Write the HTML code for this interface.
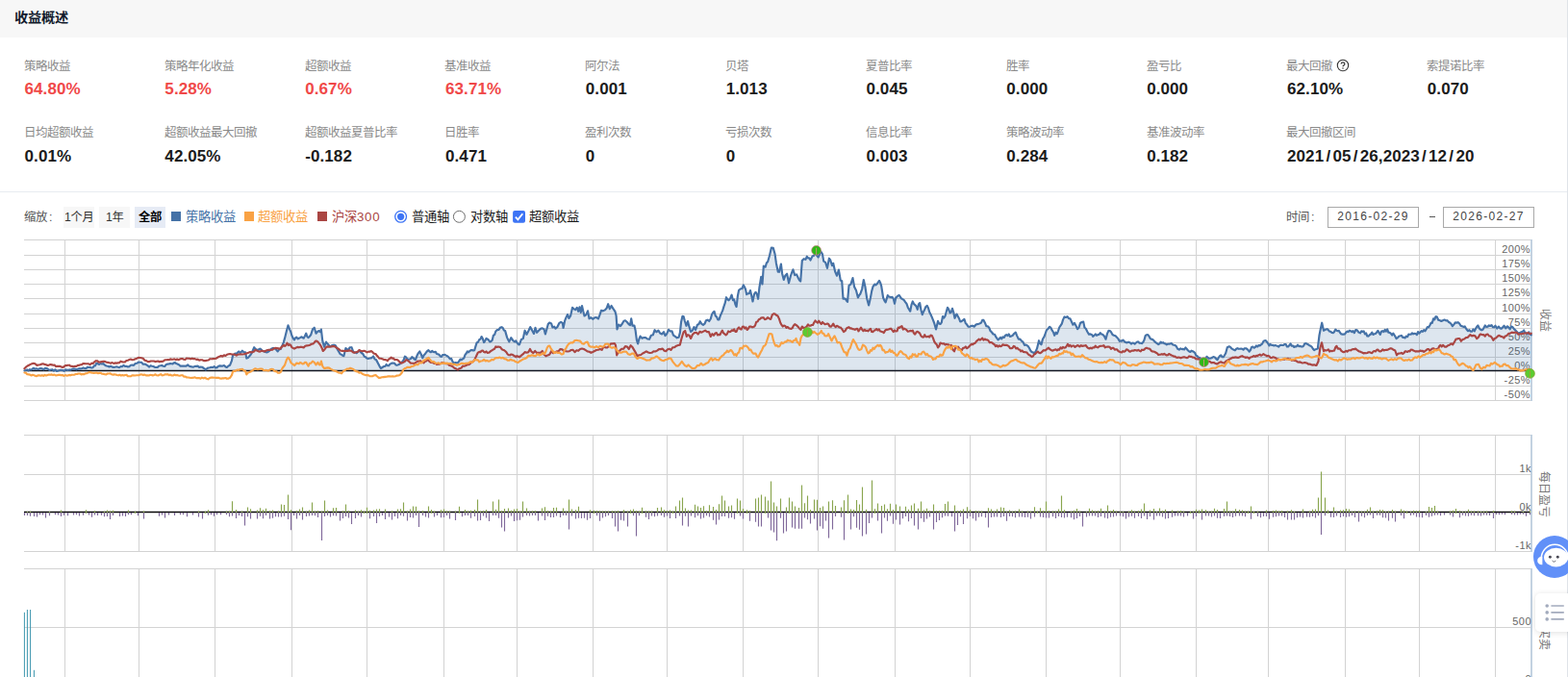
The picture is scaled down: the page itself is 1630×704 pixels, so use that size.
<!DOCTYPE html><html lang="zh-CN"><head><meta charset="utf-8"><title>收益概述</title><style>
html,body{margin:0;padding:0}
body{width:1630px;height:704px;position:relative;overflow:hidden;background:#fff;font-family:"Liberation Sans",sans-serif}
.g{position:absolute;overflow:visible;display:block}
.g text{font-family:"Liberation Sans","Noto Sans CJK SC",sans-serif}
.sr{position:absolute;opacity:0;font-size:12px;white-space:nowrap;pointer-events:none;width:1px;height:1px;overflow:hidden}
.l{position:absolute;white-space:nowrap;line-height:1;font-family:"Liberation Sans",sans-serif}
.l i.sl{font-style:normal;padding:0 2.2px}
.hdr{position:absolute;left:0;top:0;width:1629px;height:39px;background:#f7f7f7}
.sep{position:absolute;left:0;top:199px;width:1629px;height:1px;background:#e8ecf0}
.rb{position:absolute;left:1629px;top:0;width:1px;height:704px;background:#dfe3e8}
.btn{position:absolute;top:215px;width:32px;height:22px;background:#f7f7f7}
.btn.on{background:#e6ebf5}
.sq{position:absolute;top:220px;width:10px;height:10px}
.inp{position:absolute;top:215px;width:93px;height:20px;border:1px solid #a9a9a9;background:#fff}
.ax{right:38px;font-size:11px;color:#666;letter-spacing:0.45px}
.fab{position:absolute;left:1594px;top:557.2px;width:44px;height:44px;border-radius:50%;background:#6190f8}
.card{position:absolute;left:1596px;top:617px;width:40px;height:40px;border-radius:5px;background:#fff;box-shadow:0 1px 6px rgba(0,0,0,0.13)}
</style></head><body>
<div class="hdr"></div>
<svg class="g" style="left:14.90px;top:9.40px;" width="58.00" height="19.60" viewBox="0 -14 58.00 19.60" fill="#111a2c"><text x="0" y="0" font-size="14.2" font-weight="700" letter-spacing="-0.2">收益概述</text></svg>
<svg class="g" style="left:25.00px;top:60.50px;" width="50.00" height="16.80" viewBox="0 -12 50.00 16.80" fill="#8a8a8a"><text x="0" y="0" font-size="12.5" letter-spacing="-0.5">策略收益</text></svg>
<span class="l" style="left:25.50px;top:83.51px;font-size:17px;color:#f04848;font-weight:700;letter-spacing:0.10px;">64.80%</span>
<svg class="g" style="left:170.83px;top:60.50px;" width="74.00" height="16.80" viewBox="0 -12 74.00 16.80" fill="#8a8a8a"><text x="0" y="0" font-size="12.5" letter-spacing="-0.5">策略年化收益</text></svg>
<span class="l" style="left:171.33px;top:83.51px;font-size:17px;color:#f04848;font-weight:700;letter-spacing:0.10px;">5.28%</span>
<svg class="g" style="left:316.66px;top:60.50px;" width="50.00" height="16.80" viewBox="0 -12 50.00 16.80" fill="#8a8a8a"><text x="0" y="0" font-size="12.5" letter-spacing="-0.5">超额收益</text></svg>
<span class="l" style="left:317.16px;top:83.51px;font-size:17px;color:#f04848;font-weight:700;letter-spacing:0.10px;">0.67%</span>
<svg class="g" style="left:462.49px;top:60.50px;" width="50.00" height="16.80" viewBox="0 -12 50.00 16.80" fill="#8a8a8a"><text x="0" y="0" font-size="12.5" letter-spacing="-0.5">基准收益</text></svg>
<span class="l" style="left:462.99px;top:83.51px;font-size:17px;color:#f04848;font-weight:700;letter-spacing:0.10px;">63.71%</span>
<svg class="g" style="left:608.32px;top:60.50px;" width="38.00" height="16.80" viewBox="0 -12 38.00 16.80" fill="#8a8a8a"><text x="0" y="0" font-size="12.5" letter-spacing="-0.5">阿尔法</text></svg>
<span class="l" style="left:608.82px;top:83.51px;font-size:17px;color:#1b1b1b;font-weight:700;letter-spacing:0.10px;">0.001</span>
<svg class="g" style="left:754.15px;top:60.50px;" width="26.00" height="16.80" viewBox="0 -12 26.00 16.80" fill="#8a8a8a"><text x="0" y="0" font-size="12.5" letter-spacing="-0.5">贝塔</text></svg>
<span class="l" style="left:754.65px;top:83.51px;font-size:17px;color:#1b1b1b;font-weight:700;letter-spacing:0.10px;">1.013</span>
<svg class="g" style="left:899.98px;top:60.50px;" width="50.00" height="16.80" viewBox="0 -12 50.00 16.80" fill="#8a8a8a"><text x="0" y="0" font-size="12.5" letter-spacing="-0.5">夏普比率</text></svg>
<span class="l" style="left:900.48px;top:83.51px;font-size:17px;color:#1b1b1b;font-weight:700;letter-spacing:0.10px;">0.045</span>
<svg class="g" style="left:1045.81px;top:60.50px;" width="26.00" height="16.80" viewBox="0 -12 26.00 16.80" fill="#8a8a8a"><text x="0" y="0" font-size="12.5" letter-spacing="-0.5">胜率</text></svg>
<span class="l" style="left:1046.31px;top:83.51px;font-size:17px;color:#1b1b1b;font-weight:700;letter-spacing:0.10px;">0.000</span>
<svg class="g" style="left:1191.64px;top:60.50px;" width="38.00" height="16.80" viewBox="0 -12 38.00 16.80" fill="#8a8a8a"><text x="0" y="0" font-size="12.5" letter-spacing="-0.5">盈亏比</text></svg>
<span class="l" style="left:1192.14px;top:83.51px;font-size:17px;color:#1b1b1b;font-weight:700;letter-spacing:0.10px;">0.000</span>
<svg class="g" style="left:1337.47px;top:60.50px;" width="50.00" height="16.80" viewBox="0 -12 50.00 16.80" fill="#8a8a8a"><text x="0" y="0" font-size="12.5" letter-spacing="-0.5">最大回撤</text></svg>
<svg class="g" style="left:1388.9px;top:61.2px" width="14" height="14" viewBox="0 0 14 14"><circle cx="7" cy="7" r="5.7" fill="none" stroke="#333" stroke-width="1.1"/><path d="M5.1 5.6 Q5.1 3.9 7 3.9 Q8.9 3.9 8.9 5.4 Q8.9 6.4 7.9 6.9 Q7 7.4 7 8.3" fill="none" stroke="#333" stroke-width="1.15"/><circle cx="7" cy="10" r="0.75" fill="#333"/></svg>
<span class="l" style="left:1337.97px;top:83.51px;font-size:17px;color:#1b1b1b;font-weight:700;letter-spacing:0.10px;">62.10%</span>
<svg class="g" style="left:1483.30px;top:60.50px;" width="62.00" height="16.80" viewBox="0 -12 62.00 16.80" fill="#8a8a8a"><text x="0" y="0" font-size="12.5" letter-spacing="-0.5">索提诺比率</text></svg>
<span class="l" style="left:1483.80px;top:83.51px;font-size:17px;color:#1b1b1b;font-weight:700;letter-spacing:0.10px;">0.070</span>
<svg class="g" style="left:25.00px;top:130.40px;" width="74.00" height="16.80" viewBox="0 -12 74.00 16.80" fill="#8a8a8a"><text x="0" y="0" font-size="12.5" letter-spacing="-0.5">日均超额收益</text></svg>
<span class="l" style="left:25.50px;top:153.51px;font-size:17px;color:#1b1b1b;font-weight:700;letter-spacing:0.10px;">0.01%</span>
<svg class="g" style="left:170.83px;top:130.40px;" width="98.00" height="16.80" viewBox="0 -12 98.00 16.80" fill="#8a8a8a"><text x="0" y="0" font-size="12.5" letter-spacing="-0.5">超额收益最大回撤</text></svg>
<span class="l" style="left:171.33px;top:153.51px;font-size:17px;color:#1b1b1b;font-weight:700;letter-spacing:0.10px;">42.05%</span>
<svg class="g" style="left:316.66px;top:130.40px;" width="98.00" height="16.80" viewBox="0 -12 98.00 16.80" fill="#8a8a8a"><text x="0" y="0" font-size="12.5" letter-spacing="-0.5">超额收益夏普比率</text></svg>
<span class="l" style="left:317.16px;top:153.51px;font-size:17px;color:#1b1b1b;font-weight:700;letter-spacing:0.10px;">-0.182</span>
<svg class="g" style="left:462.49px;top:130.40px;" width="38.00" height="16.80" viewBox="0 -12 38.00 16.80" fill="#8a8a8a"><text x="0" y="0" font-size="12.5" letter-spacing="-0.5">日胜率</text></svg>
<span class="l" style="left:462.99px;top:153.51px;font-size:17px;color:#1b1b1b;font-weight:700;letter-spacing:0.10px;">0.471</span>
<svg class="g" style="left:608.32px;top:130.40px;" width="50.00" height="16.80" viewBox="0 -12 50.00 16.80" fill="#8a8a8a"><text x="0" y="0" font-size="12.5" letter-spacing="-0.5">盈利次数</text></svg>
<span class="l" style="left:608.82px;top:153.51px;font-size:17px;color:#1b1b1b;font-weight:700;letter-spacing:0.10px;">0</span>
<svg class="g" style="left:754.15px;top:130.40px;" width="50.00" height="16.80" viewBox="0 -12 50.00 16.80" fill="#8a8a8a"><text x="0" y="0" font-size="12.5" letter-spacing="-0.5">亏损次数</text></svg>
<span class="l" style="left:754.65px;top:153.51px;font-size:17px;color:#1b1b1b;font-weight:700;letter-spacing:0.10px;">0</span>
<svg class="g" style="left:899.98px;top:130.40px;" width="50.00" height="16.80" viewBox="0 -12 50.00 16.80" fill="#8a8a8a"><text x="0" y="0" font-size="12.5" letter-spacing="-0.5">信息比率</text></svg>
<span class="l" style="left:900.48px;top:153.51px;font-size:17px;color:#1b1b1b;font-weight:700;letter-spacing:0.10px;">0.003</span>
<svg class="g" style="left:1045.81px;top:130.40px;" width="62.00" height="16.80" viewBox="0 -12 62.00 16.80" fill="#8a8a8a"><text x="0" y="0" font-size="12.5" letter-spacing="-0.5">策略波动率</text></svg>
<span class="l" style="left:1046.31px;top:153.51px;font-size:17px;color:#1b1b1b;font-weight:700;letter-spacing:0.10px;">0.284</span>
<svg class="g" style="left:1191.64px;top:130.40px;" width="62.00" height="16.80" viewBox="0 -12 62.00 16.80" fill="#8a8a8a"><text x="0" y="0" font-size="12.5" letter-spacing="-0.5">基准波动率</text></svg>
<span class="l" style="left:1192.14px;top:153.51px;font-size:17px;color:#1b1b1b;font-weight:700;letter-spacing:0.10px;">0.182</span>
<svg class="g" style="left:1337.47px;top:130.40px;" width="74.00" height="16.80" viewBox="0 -12 74.00 16.80" fill="#8a8a8a"><text x="0" y="0" font-size="12.5" letter-spacing="-0.5">最大回撤区间</text></svg>
<span class="l" style="left:1337.97px;top:153.51px;font-size:17px;color:#1b1b1b;font-weight:700;letter-spacing:0.10px;">2021<i class="sl">/</i>05<i class="sl">/</i>26,2023<i class="sl">/</i>12<i class="sl">/</i>20</span>
<div class="sep"></div><div class="rb"></div>
<svg class="g" style="left:25.00px;top:217.80px;" width="31.94" height="16.80" viewBox="0 -12 31.94 16.80" fill="#555"><text x="0" y="0" font-size="12.4" letter-spacing="-0.4">缩放<tspan dx="2">:</tspan></text></svg>
<div class="btn" style="left:66px"></div><div class="btn" style="left:103px"></div><div class="btn on" style="left:140px"></div>
<svg class="g" style="left:67.20px;top:217.70px;" width="32.66" height="16.80" viewBox="0 -12 32.66 16.80" fill="#333"><text x="0" y="0" font-size="12.3" letter-spacing="-0.3">1个月</text></svg>
<svg class="g" style="left:109.70px;top:217.70px;" width="20.66" height="16.80" viewBox="0 -12 20.66 16.80" fill="#333"><text x="0" y="0" font-size="12.3" letter-spacing="-0.3">1年</text></svg>
<svg class="g" style="left:144.20px;top:217.80px;" width="26.00" height="16.80" viewBox="0 -12 26.00 16.80" fill="#000"><text x="0" y="0" font-size="12.3" font-weight="700" letter-spacing="-0.3">全部</text></svg>
<div class="sq" style="left:178px;background:#4572A7"></div>
<svg class="g" style="left:192.60px;top:216.90px;" width="54.00" height="18.20" viewBox="0 -13 54.00 18.20" fill="#4572A7"><text x="0" y="0" font-size="13.3" letter-spacing="-0.3">策略收益</text></svg>
<div class="sq" style="left:254px;background:#f9a244"></div>
<svg class="g" style="left:268.40px;top:216.90px;" width="54.00" height="18.20" viewBox="0 -13 54.00 18.20" fill="#f9a244"><text x="0" y="0" font-size="13.3" letter-spacing="-0.3">超额收益</text></svg>
<div class="sq" style="left:330px;background:#AA4643"></div>
<svg class="g" style="left:344.90px;top:216.90px;" width="52.35" height="18.20" viewBox="0 -13 52.35 18.20" fill="#AA4643"><text x="0" y="0" font-size="13.3" letter-spacing="-0.3">沪深<tspan letter-spacing="0.7">300</tspan></text></svg>
<svg class="g" style="left:409px;top:218px" width="140" height="15" viewBox="409 218 140 15"><circle cx="416.6" cy="225.3" r="5.9" fill="#fff" stroke="#3d74f5" stroke-width="1.3"/><circle cx="416.6" cy="225.3" r="3.6" fill="#3d74f5"/><circle cx="477.4" cy="225.3" r="6" fill="#fff" stroke="#707070" stroke-width="1"/><rect x="533.1" y="218.9" width="12.9" height="12.9" rx="2" fill="#3d74f5"/><path d="M535.9 225.6 L538.4 228.3 L543.3 222.2" fill="none" stroke="#fff" stroke-width="1.8"/></svg>
<svg class="g" style="left:428.10px;top:216.90px;" width="41.00" height="18.20" viewBox="0 -13 41.00 18.20" fill="#1a1a1a"><text x="0" y="0" font-size="13.3" letter-spacing="-0.3">普通轴</text></svg>
<svg class="g" style="left:489.00px;top:216.90px;" width="41.00" height="18.20" viewBox="0 -13 41.00 18.20" fill="#1a1a1a"><text x="0" y="0" font-size="13.3" letter-spacing="-0.3">对数轴</text></svg>
<svg class="g" style="left:550.20px;top:216.90px;" width="54.00" height="18.20" viewBox="0 -13 54.00 18.20" fill="#1a1a1a"><text x="0" y="0" font-size="13.3" letter-spacing="-0.3">超额收益</text></svg>
<svg class="g" style="left:1337.20px;top:217.80px;" width="31.94" height="16.80" viewBox="0 -12 31.94 16.80" fill="#555"><text x="0" y="0" font-size="12.4" letter-spacing="-0.4">时间<tspan dx="2">:</tspan></text></svg>
<div class="inp" style="left:1380px"></div><div class="inp" style="left:1500px"></div>
<span class="l" style="left:1390.20px;top:219.44px;font-size:12px;color:#444;letter-spacing:1.32px;">2016-02-29</span>
<span class="l" style="left:1510.20px;top:219.44px;font-size:12px;color:#444;letter-spacing:1.32px;">2026-02-27</span>
<span class="l" style="left:1486.4px;top:224.8px;width:5.6px;height:1px;background:#555;font-size:0">-</span>
<svg class="g" style="left:0;top:240px" width="1630" height="464" viewBox="0 240 1630 464"><g fill="none" shape-rendering="crispEdges"><path d="M25 249.5H1592.5" stroke="#d3d3d3" stroke-width="1"/><path d="M25 265.5H1592.5" stroke="#d3d3d3" stroke-width="1"/><path d="M25 280.5H1592.5" stroke="#d3d3d3" stroke-width="1"/><path d="M25 295.5H1592.5" stroke="#d3d3d3" stroke-width="1"/><path d="M25 310.5H1592.5" stroke="#d3d3d3" stroke-width="1"/><path d="M25 326.5H1592.5" stroke="#d3d3d3" stroke-width="1"/><path d="M25 341.5H1592.5" stroke="#d3d3d3" stroke-width="1"/><path d="M25 356.5H1592.5" stroke="#d3d3d3" stroke-width="1"/><path d="M25 371.5H1592.5" stroke="#d3d3d3" stroke-width="1"/><path d="M25 401.5H1592.5" stroke="#d3d3d3" stroke-width="1"/><path d="M25 416.5H1592.5" stroke="#d3d3d3" stroke-width="1"/><path d="M67.5 249.5V416.5" stroke="#d3d3d3" stroke-width="1"/><path d="M144.5 249.5V416.5" stroke="#d3d3d3" stroke-width="1"/><path d="M223.5 249.5V416.5" stroke="#d3d3d3" stroke-width="1"/><path d="M303.5 249.5V416.5" stroke="#d3d3d3" stroke-width="1"/><path d="M381.6 249.5V416.5" stroke="#d3d3d3" stroke-width="1"/><path d="M461.5 249.5V416.5" stroke="#d3d3d3" stroke-width="1"/><path d="M537.6 249.5V416.5" stroke="#d3d3d3" stroke-width="1"/><path d="M616.5 249.5V416.5" stroke="#d3d3d3" stroke-width="1"/><path d="M693.7 249.5V416.5" stroke="#d3d3d3" stroke-width="1"/><path d="M772.5 249.5V416.5" stroke="#d3d3d3" stroke-width="1"/><path d="M850.6 249.5V416.5" stroke="#d3d3d3" stroke-width="1"/><path d="M930.5 249.5V416.5" stroke="#d3d3d3" stroke-width="1"/><path d="M1008.3 249.5V416.5" stroke="#d3d3d3" stroke-width="1"/><path d="M1087.5 249.5V416.5" stroke="#d3d3d3" stroke-width="1"/><path d="M1164.5 249.5V416.5" stroke="#d3d3d3" stroke-width="1"/><path d="M1243.4 249.5V416.5" stroke="#d3d3d3" stroke-width="1"/><path d="M1318.7 249.5V416.5" stroke="#d3d3d3" stroke-width="1"/><path d="M1398.5 249.5V416.5" stroke="#d3d3d3" stroke-width="1"/><path d="M1475.7 249.5V416.5" stroke="#d3d3d3" stroke-width="1"/><path d="M1554.7 249.5V416.5" stroke="#d3d3d3" stroke-width="1"/><path d="M25 452.5H1592.5" stroke="#d3d3d3" stroke-width="1"/><path d="M25 493.5H1592.5" stroke="#d3d3d3" stroke-width="1"/><path d="M25 573.5H1592.5" stroke="#d3d3d3" stroke-width="1"/><path d="M67.5 452.5V573.5" stroke="#d3d3d3" stroke-width="1"/><path d="M144.5 452.5V573.5" stroke="#d3d3d3" stroke-width="1"/><path d="M223.5 452.5V573.5" stroke="#d3d3d3" stroke-width="1"/><path d="M303.5 452.5V573.5" stroke="#d3d3d3" stroke-width="1"/><path d="M381.6 452.5V573.5" stroke="#d3d3d3" stroke-width="1"/><path d="M461.5 452.5V573.5" stroke="#d3d3d3" stroke-width="1"/><path d="M537.6 452.5V573.5" stroke="#d3d3d3" stroke-width="1"/><path d="M616.5 452.5V573.5" stroke="#d3d3d3" stroke-width="1"/><path d="M693.7 452.5V573.5" stroke="#d3d3d3" stroke-width="1"/><path d="M772.5 452.5V573.5" stroke="#d3d3d3" stroke-width="1"/><path d="M850.6 452.5V573.5" stroke="#d3d3d3" stroke-width="1"/><path d="M930.5 452.5V573.5" stroke="#d3d3d3" stroke-width="1"/><path d="M1008.3 452.5V573.5" stroke="#d3d3d3" stroke-width="1"/><path d="M1087.5 452.5V573.5" stroke="#d3d3d3" stroke-width="1"/><path d="M1164.5 452.5V573.5" stroke="#d3d3d3" stroke-width="1"/><path d="M1243.4 452.5V573.5" stroke="#d3d3d3" stroke-width="1"/><path d="M1318.7 452.5V573.5" stroke="#d3d3d3" stroke-width="1"/><path d="M1398.5 452.5V573.5" stroke="#d3d3d3" stroke-width="1"/><path d="M1475.7 452.5V573.5" stroke="#d3d3d3" stroke-width="1"/><path d="M1554.7 452.5V573.5" stroke="#d3d3d3" stroke-width="1"/><path d="M25 591.5H1592.5" stroke="#d3d3d3" stroke-width="1"/><path d="M25 652.5H1592.5" stroke="#d3d3d3" stroke-width="1"/><path d="M67.5 591.5V704" stroke="#d3d3d3" stroke-width="1"/><path d="M144.5 591.5V704" stroke="#d3d3d3" stroke-width="1"/><path d="M223.5 591.5V704" stroke="#d3d3d3" stroke-width="1"/><path d="M303.5 591.5V704" stroke="#d3d3d3" stroke-width="1"/><path d="M381.6 591.5V704" stroke="#d3d3d3" stroke-width="1"/><path d="M461.5 591.5V704" stroke="#d3d3d3" stroke-width="1"/><path d="M537.6 591.5V704" stroke="#d3d3d3" stroke-width="1"/><path d="M616.5 591.5V704" stroke="#d3d3d3" stroke-width="1"/><path d="M693.7 591.5V704" stroke="#d3d3d3" stroke-width="1"/><path d="M772.5 591.5V704" stroke="#d3d3d3" stroke-width="1"/><path d="M850.6 591.5V704" stroke="#d3d3d3" stroke-width="1"/><path d="M930.5 591.5V704" stroke="#d3d3d3" stroke-width="1"/><path d="M1008.3 591.5V704" stroke="#d3d3d3" stroke-width="1"/><path d="M1087.5 591.5V704" stroke="#d3d3d3" stroke-width="1"/><path d="M1164.5 591.5V704" stroke="#d3d3d3" stroke-width="1"/><path d="M1243.4 591.5V704" stroke="#d3d3d3" stroke-width="1"/><path d="M1318.7 591.5V704" stroke="#d3d3d3" stroke-width="1"/><path d="M1398.5 591.5V704" stroke="#d3d3d3" stroke-width="1"/><path d="M1475.7 591.5V704" stroke="#d3d3d3" stroke-width="1"/><path d="M1554.7 591.5V704" stroke="#d3d3d3" stroke-width="1"/></g><g fill="none"><path d="M1592 249V417" stroke="#c0d0e0" stroke-width="1.9"/><path d="M1592 452V574" stroke="#c0d0e0" stroke-width="1.9"/><path d="M1592 591V704" stroke="#c0d0e0" stroke-width="1.9"/></g><text x="1591.1" y="263.15" text-anchor="end" font-family="Liberation Sans, sans-serif" font-size="11" letter-spacing="0.45" fill="#666">200%</text><text x="1591.1" y="278.15" text-anchor="end" font-family="Liberation Sans, sans-serif" font-size="11" letter-spacing="0.45" fill="#666">175%</text><text x="1591.1" y="293.15" text-anchor="end" font-family="Liberation Sans, sans-serif" font-size="11" letter-spacing="0.45" fill="#666">150%</text><text x="1591.1" y="308.15" text-anchor="end" font-family="Liberation Sans, sans-serif" font-size="11" letter-spacing="0.45" fill="#666">125%</text><text x="1591.1" y="324.15" text-anchor="end" font-family="Liberation Sans, sans-serif" font-size="11" letter-spacing="0.45" fill="#666">100%</text><text x="1591.1" y="339.15" text-anchor="end" font-family="Liberation Sans, sans-serif" font-size="11" letter-spacing="0.45" fill="#666">75%</text><text x="1591.1" y="354.15" text-anchor="end" font-family="Liberation Sans, sans-serif" font-size="11" letter-spacing="0.45" fill="#666">50%</text><text x="1591.1" y="369.15" text-anchor="end" font-family="Liberation Sans, sans-serif" font-size="11" letter-spacing="0.45" fill="#666">25%</text><text x="1591.1" y="384.25" text-anchor="end" font-family="Liberation Sans, sans-serif" font-size="11" letter-spacing="0.45" fill="#666">0%</text><text x="1591.1" y="399.35" text-anchor="end" font-family="Liberation Sans, sans-serif" font-size="11" letter-spacing="0.45" fill="#666">-25%</text><text x="1591.1" y="414.25" text-anchor="end" font-family="Liberation Sans, sans-serif" font-size="11" letter-spacing="0.45" fill="#666">-50%</text><path d="M25.4 385.5 L26.8 385.0 L28.2 384.4 L29.6 385.3 L31.0 384.2 L32.3 384.5 L33.5 383.9 L34.7 382.8 L36.4 383.8 L38.0 383.3 L39.6 384.1 L41.1 383.3 L42.6 383.0 L44.0 383.5 L45.5 384.3 L47.0 382.9 L48.5 383.0 L49.9 383.9 L51.4 385.0 L52.9 384.5 L54.4 384.2 L55.9 385.6 L57.4 384.3 L59.0 386.0 L60.5 385.5 L62.1 384.9 L63.8 384.8 L65.4 385.1 L66.6 385.8 L67.9 384.4 L69.1 384.6 L70.6 384.9 L72.0 384.4 L73.5 384.7 L75.0 383.8 L76.4 383.6 L77.9 383.6 L79.4 384.3 L80.9 383.8 L82.3 383.2 L83.8 383.4 L85.3 383.0 L86.7 382.4 L88.2 383.1 L89.7 382.9 L91.2 381.7 L92.5 382.0 L93.9 381.9 L95.2 382.5 L96.6 382.3 L97.8 380.3 L99.0 380.4 L100.2 377.8 L101.7 378.1 L103.1 379.0 L104.5 378.0 L105.9 378.5 L107.4 378.1 L109.0 379.6 L110.5 380.5 L112.0 380.7 L113.6 381.5 L115.1 380.8 L116.6 381.6 L118.2 381.9 L119.6 381.7 L121.1 381.3 L122.6 381.8 L124.0 382.1 L125.5 381.1 L127.0 381.2 L128.5 379.8 L129.9 380.8 L131.4 380.8 L132.9 381.5 L134.4 381.1 L135.9 379.8 L137.5 379.5 L139.0 379.9 L140.7 378.0 L142.3 377.8 L143.9 376.6 L145.6 376.8 L147.2 376.9 L148.8 378.7 L150.5 378.5 L152.1 379.3 L153.7 380.4 L155.2 381.6 L156.6 380.2 L158.0 380.7 L159.5 381.0 L160.9 381.9 L162.3 382.0 L163.8 381.9 L165.3 380.5 L166.7 380.3 L168.2 380.0 L169.7 380.8 L171.2 381.0 L172.6 379.2 L174.1 378.6 L175.6 378.4 L177.1 378.1 L178.3 378.3 L179.5 378.4 L180.7 377.4 L182.0 377.1 L183.2 378.1 L184.4 378.5 L186.0 379.3 L187.5 380.6 L189.0 380.6 L190.6 380.6 L192.1 380.6 L193.6 380.7 L195.2 379.4 L196.7 380.7 L198.2 381.1 L199.6 381.5 L201.1 381.6 L202.6 380.9 L204.1 380.9 L205.6 380.6 L207.1 382.0 L208.6 381.5 L210.2 381.7 L211.4 382.7 L212.6 383.4 L213.9 384.5 L215.1 383.3 L216.3 382.5 L218.0 382.3 L219.6 381.9 L221.2 382.0 L222.7 381.1 L224.2 382.5 L225.6 382.1 L227.1 380.8 L228.6 380.4 L230.1 380.6 L231.5 380.6 L233.0 380.1 L234.5 381.4 L235.9 382.0 L237.5 380.5 L239.1 379.7 L240.9 375.1 L242.1 369.3 L243.3 368.6 L244.5 367.5 L245.8 368.1 L247.0 366.5 L248.2 365.5 L249.4 366.9 L250.7 366.0 L251.9 364.7 L253.5 366.3 L255.1 366.4 L256.3 372.6 L257.8 372.0 L259.3 370.3 L260.5 369.0 L261.7 367.0 L262.9 364.3 L264.2 361.2 L265.4 362.9 L266.6 363.3 L267.9 364.3 L269.1 363.2 L270.3 362.6 L271.5 363.4 L272.8 364.7 L274.0 365.3 L275.2 365.8 L276.4 366.2 L277.7 366.4 L278.9 365.7 L280.1 364.8 L281.4 363.4 L282.6 362.4 L283.8 361.9 L285.0 362.2 L286.3 362.7 L287.5 364.1 L288.7 365.4 L290.3 363.3 L291.9 362.9 L293.6 358.9 L294.8 356.1 L296.1 351.4 L298.0 343.8 L299.5 338.3 L301.2 342.6 L302.3 345.2 L303.4 349.0 L304.7 351.7 L305.9 353.4 L307.1 351.4 L308.3 350.7 L309.6 352.4 L310.8 351.7 L312.0 351.1 L313.2 350.3 L314.5 351.0 L315.7 351.7 L316.9 349.4 L318.2 346.7 L319.4 350.2 L320.6 351.1 L321.8 349.9 L323.1 348.3 L325.0 342.4 L326.8 340.7 L328.5 346.7 L330.4 344.5 L331.7 344.1 L332.9 345.1 L333.9 342.5 L335.3 354.6 L337.1 360.8 L339.0 355.6 L341.0 358.1 L342.5 359.7 L343.9 360.2 L345.2 359.0 L346.4 358.8 L347.6 358.8 L348.8 359.2 L350.1 361.9 L351.3 364.2 L352.5 366.3 L353.7 368.3 L355.0 368.7 L356.2 369.8 L357.4 370.2 L359.4 362.1 L360.5 363.1 L361.6 364.3 L363.6 361.3 L365.5 361.2 L367.2 365.6 L368.5 366.5 L369.7 366.5 L370.9 367.2 L372.1 365.6 L373.4 364.8 L374.6 365.7 L375.8 367.0 L377.3 368.0 L378.8 370.7 L380.0 371.3 L381.2 372.4 L382.8 373.0 L384.4 372.5 L385.6 372.5 L386.9 371.6 L388.1 370.5 L389.6 373.6 L391.0 374.1 L392.3 376.4 L393.5 378.8 L394.7 381.1 L395.9 383.0 L397.5 382.0 L399.1 381.0 L400.4 380.9 L401.6 379.0 L402.8 380.2 L404.1 380.3 L405.3 378.7 L406.5 378.1 L407.7 377.6 L409.0 377.5 L410.2 377.8 L411.4 379.4 L412.6 379.8 L414.1 379.3 L415.6 378.5 L416.8 377.2 L418.0 376.4 L419.6 374.4 L420.9 370.7 L422.1 371.5 L423.3 373.2 L424.5 373.8 L425.8 373.5 L427.0 373.1 L428.2 371.2 L429.4 372.0 L430.7 373.5 L431.9 374.1 L433.4 370.1 L434.8 367.3 L436.3 365.4 L437.8 368.5 L439.3 372.3 L440.5 369.6 L441.7 368.3 L442.9 366.7 L444.2 365.0 L445.4 364.1 L446.6 365.5 L447.9 366.2 L449.1 364.9 L450.3 365.9 L451.5 366.2 L452.8 365.8 L454.0 368.0 L455.2 368.2 L456.4 368.8 L457.7 370.4 L458.9 370.9 L460.1 369.1 L461.4 369.0 L462.6 368.9 L463.8 369.6 L465.0 370.2 L466.3 371.3 L467.7 373.2 L469.2 372.9 L470.4 375.8 L471.7 377.9 L473.3 377.0 L474.9 377.4 L476.1 376.9 L477.3 375.6 L478.5 373.5 L479.8 374.2 L481.0 373.2 L482.2 372.6 L483.4 369.2 L484.7 367.5 L485.9 365.4 L487.1 366.3 L488.3 365.1 L489.6 364.1 L490.8 364.1 L492.0 364.6 L493.2 364.2 L494.5 359.9 L495.7 356.2 L496.9 355.9 L498.2 353.2 L499.4 352.6 L500.6 350.0 L501.8 352.1 L503.1 356.1 L504.3 354.4 L505.5 351.9 L506.8 352.7 L508.0 353.7 L509.2 355.5 L510.4 355.1 L511.7 353.7 L512.9 348.7 L514.1 348.1 L515.3 344.5 L516.8 343.1 L518.3 343.0 L520.2 340.5 L521.5 340.2 L522.7 341.0 L523.9 343.4 L525.1 343.9 L527.1 350.9 L528.2 353.3 L529.3 355.3 L531.3 351.1 L532.5 353.0 L533.7 354.5 L535.0 355.5 L536.2 354.3 L537.8 356.8 L539.4 358.4 L540.0 358.2 L541.9 353.0 L543.8 352.1 L545.6 343.7 L547.5 347.8 L549.4 344.0 L551.2 340.1 L553.1 343.4 L555.0 347.0 L556.5 340.8 L558.1 345.8 L560.0 343.7 L561.9 341.9 L563.8 341.3 L565.6 342.4 L566.9 347.5 L568.1 343.2 L569.8 337.0 L571.2 335.5 L573.1 336.4 L574.4 340.5 L576.2 339.6 L577.5 341.7 L579.4 340.0 L581.2 336.2 L583.1 334.9 L584.8 335.9 L585.6 341.0 L587.2 333.4 L588.5 330.1 L590.0 327.0 L591.5 331.0 L593.1 328.4 L595.0 319.9 L596.5 321.1 L598.1 322.2 L599.8 319.8 L601.2 323.8 L602.5 319.4 L603.8 324.9 L605.0 318.0 L606.2 323.3 L607.5 328.5 L609.4 327.2 L611.0 323.3 L612.5 331.3 L614.4 330.2 L616.2 331.8 L618.1 330.3 L620.0 330.1 L621.9 331.5 L623.5 327.4 L625.0 322.8 L626.9 323.4 L628.8 322.4 L630.6 320.6 L632.2 316.2 L633.8 321.3 L635.6 318.0 L637.2 320.6 L639.4 323.8 L640.6 328.3 L641.5 342.4 L643.1 337.6 L645.0 339.1 L646.9 336.5 L648.5 333.7 L650.0 333.3 L651.9 335.0 L653.8 337.4 L655.0 338.1 L656.2 331.4 L657.5 338.7 L659.4 338.5 L660.6 343.6 L661.9 353.7 L663.1 357.4 L664.4 352.5 L665.6 349.6 L667.5 351.8 L669.4 351.1 L671.2 351.1 L673.1 352.5 L675.0 352.8 L676.9 348.7 L678.8 348.3 L680.6 343.2 L682.5 345.3 L684.4 343.6 L686.2 346.5 L688.1 347.5 L690.0 345.2 L691.5 349.1 L693.1 347.3 L695.0 342.8 L696.9 344.5 L698.5 344.4 L700.0 348.6 L701.9 349.9 L703.8 351.3 L705.6 350.8 L706.9 345.9 L708.1 334.7 L709.4 328.9 L710.6 329.1 L711.9 334.0 L713.5 338.8 L715.0 334.0 L716.5 339.9 L718.1 344.9 L720.0 343.4 L721.5 340.0 L723.1 343.0 L725.0 337.7 L726.5 337.0 L727.8 334.2 L729.4 336.8 L731.0 337.8 L732.5 336.7 L734.0 333.3 L735.6 332.7 L737.2 334.0 L738.8 331.5 L740.0 327.0 L741.2 325.0 L742.5 323.8 L743.8 328.5 L745.0 329.3 L746.2 332.3 L747.5 332.3 L748.8 328.3 L750.0 325.7 L751.2 322.9 L752.5 318.6 L753.8 314.9 L755.0 309.2 L756.2 311.1 L757.5 312.3 L759.1 310.4 L760.6 306.7 L761.9 312.1 L763.1 311.3 L764.4 316.5 L765.6 319.0 L766.9 307.6 L768.1 301.8 L770.0 300.2 L771.4 300.1 L772.8 296.4 L773.9 298.2 L775.0 300.7 L776.2 306.2 L777.5 305.2 L778.8 305.2 L780.0 302.0 L781.2 307.2 L782.5 313.5 L784.1 305.6 L785.6 303.8 L786.9 306.0 L788.1 310.8 L789.4 299.1 L791.2 287.8 L792.5 295.5 L793.8 276.6 L795.6 277.7 L796.9 273.4 L798.1 272.3 L800.0 265.8 L801.9 257.6 L803.8 257.9 L805.6 264.3 L806.9 273.7 L808.8 282.7 L810.0 282.8 L811.9 274.5 L813.1 284.4 L814.8 291.0 L816.2 286.8 L818.1 284.7 L820.0 294.3 L821.9 287.0 L823.1 283.5 L824.4 280.3 L826.2 286.1 L828.1 285.4 L830.0 289.5 L831.1 291.4 L832.2 292.5 L833.8 271.1 L835.6 269.2 L837.5 269.8 L838.8 266.7 L840.0 268.3 L841.2 268.3 L842.5 270.5 L844.4 266.6 L846.2 265.8 L848.1 262.1 L849.4 266.1 L850.6 267.5 L851.9 264.7 L853.1 261.2 L855.0 264.3 L856.2 271.6 L858.1 272.8 L860.0 278.9 L861.9 268.7 L863.1 270.1 L865.0 276.2 L866.2 273.8 L868.1 282.3 L870.0 286.7 L871.9 280.6 L873.8 291.6 L875.2 292.2 L876.5 310.7 L877.6 310.6 L878.8 310.6 L879.9 312.5 L881.0 313.9 L882.5 296.9 L884.4 295.7 L886.5 289.1 L888.1 298.2 L890.0 302.0 L891.9 309.4 L893.1 307.2 L894.4 305.5 L896.2 300.3 L897.8 291.0 L899.4 298.0 L901.2 310.5 L903.1 317.4 L905.0 309.2 L906.2 302.6 L907.5 298.0 L909.4 295.5 L910.6 296.3 L911.9 295.0 L914.0 291.8 L915.1 293.9 L916.2 297.4 L918.1 309.5 L919.4 312.7 L920.6 314.4 L922.8 307.1 L923.9 308.5 L925.0 308.8 L926.2 309.3 L927.5 308.8 L928.8 310.7 L930.0 315.7 L931.2 309.8 L932.5 308.4 L933.6 307.5 L934.8 307.0 L936.9 310.3 L938.3 311.1 L939.8 312.1 L941.1 314.1 L942.4 315.7 L943.8 319.7 L945.0 321.7 L946.2 323.7 L947.5 316.9 L948.8 313.4 L950.0 316.0 L951.2 317.1 L952.5 318.5 L953.8 321.8 L955.0 316.3 L956.2 315.1 L957.5 322.5 L958.8 327.1 L960.0 324.2 L961.2 321.8 L962.5 318.8 L963.8 317.9 L965.0 320.2 L966.2 324.5 L967.5 327.0 L968.8 329.9 L970.0 332.8 L971.2 336.0 L973.0 342.5 L975.0 333.9 L976.2 336.5 L977.5 337.0 L978.8 335.3 L980.0 329.0 L981.2 330.6 L982.5 328.7 L983.8 324.0 L985.0 319.9 L986.2 321.7 L987.5 325.3 L988.8 324.8 L990.0 320.8 L991.2 324.5 L992.5 330.8 L994.5 326.5 L995.8 328.9 L997.0 331.2 L998.2 334.5 L999.5 334.2 L1001.0 333.0 L1002.5 332.0 L1003.8 336.2 L1005.0 337.3 L1006.5 339.6 L1008.0 339.8 L1009.6 338.8 L1011.2 338.8 L1012.9 339.7 L1014.5 337.5 L1016.0 337.1 L1017.5 336.7 L1018.8 336.3 L1020.0 335.6 L1021.2 332.8 L1022.5 332.9 L1023.8 335.4 L1025.4 339.3 L1027.0 339.4 L1028.2 340.7 L1029.5 344.0 L1031.0 345.5 L1032.5 347.5 L1034.0 347.7 L1035.5 350.7 L1037.5 353.3 L1038.8 352.3 L1040.0 350.9 L1041.2 352.4 L1042.5 350.4 L1043.8 351.0 L1045.0 348.9 L1046.2 348.0 L1047.5 349.1 L1048.8 347.5 L1050.0 349.9 L1051.2 349.6 L1052.5 349.1 L1054.1 347.0 L1055.8 345.7 L1057.2 349.1 L1058.8 352.6 L1060.4 352.6 L1062.0 354.6 L1063.5 355.7 L1065.0 358.9 L1066.2 358.6 L1067.5 359.1 L1068.8 360.1 L1070.0 362.0 L1071.2 364.5 L1072.5 366.0 L1073.8 366.4 L1075.0 367.5 L1076.5 365.6 L1078.0 362.4 L1080.0 354.2 L1081.2 357.1 L1082.5 358.3 L1084.0 352.5 L1085.5 350.2 L1086.8 346.5 L1088.0 343.2 L1089.6 341.7 L1091.2 339.8 L1092.5 341.1 L1093.8 343.7 L1095.0 345.5 L1096.2 348.8 L1097.5 345.7 L1098.8 347.2 L1100.0 344.3 L1101.2 340.5 L1102.5 338.6 L1103.8 336.7 L1105.0 332.6 L1106.5 329.4 L1108.0 329.9 L1109.6 329.2 L1111.2 331.3 L1112.5 331.4 L1113.8 334.2 L1115.4 337.7 L1117.0 335.9 L1118.5 338.7 L1120.0 342.2 L1121.5 340.7 L1123.0 336.0 L1124.6 335.0 L1126.2 334.6 L1127.5 340.7 L1128.8 341.8 L1130.4 345.0 L1132.0 347.7 L1133.5 347.4 L1135.0 348.0 L1136.2 349.8 L1137.5 348.9 L1138.8 347.4 L1140.0 348.8 L1141.2 348.1 L1142.5 347.9 L1143.8 346.1 L1145.0 347.5 L1146.2 347.7 L1147.9 349.5 L1149.5 352.7 L1151.0 346.9 L1152.5 343.8 L1153.8 344.0 L1155.0 345.3 L1156.5 348.0 L1158.0 348.8 L1159.6 349.3 L1161.2 350.9 L1162.5 352.4 L1163.8 354.8 L1165.0 354.4 L1166.2 354.6 L1167.4 353.6 L1168.6 354.8 L1169.8 355.8 L1171.0 356.4 L1172.3 355.9 L1173.5 355.9 L1174.7 356.2 L1175.9 357.6 L1177.2 356.5 L1178.4 356.7 L1179.6 357.7 L1180.9 356.5 L1182.1 355.5 L1183.3 355.4 L1184.5 356.8 L1185.8 356.7 L1187.0 357.1 L1188.2 356.0 L1189.4 353.8 L1190.7 349.1 L1191.9 348.2 L1193.1 348.1 L1194.4 349.4 L1195.6 351.8 L1196.8 352.7 L1198.0 352.9 L1199.3 354.0 L1200.5 355.4 L1201.7 356.3 L1202.9 357.2 L1204.2 358.2 L1205.4 357.4 L1206.6 355.6 L1207.8 356.6 L1209.1 356.2 L1210.3 357.2 L1211.5 357.4 L1212.8 358.4 L1214.0 357.6 L1215.2 357.7 L1216.4 357.4 L1217.7 356.9 L1218.9 358.3 L1220.1 358.8 L1221.4 359.0 L1222.6 359.8 L1224.2 362.7 L1225.8 363.6 L1227.2 362.4 L1228.7 363.1 L1229.9 362.9 L1231.2 363.4 L1232.4 361.5 L1233.6 362.7 L1234.8 364.3 L1236.1 365.4 L1237.3 366.0 L1238.5 364.7 L1239.8 365.2 L1241.0 365.9 L1242.2 367.0 L1243.4 369.7 L1244.7 370.3 L1245.9 371.9 L1247.1 371.9 L1248.3 373.3 L1249.6 373.3 L1250.8 373.4 L1252.0 373.5 L1253.3 373.3 L1254.5 370.8 L1255.7 372.0 L1256.9 372.8 L1258.2 372.6 L1259.4 372.3 L1260.6 371.5 L1261.8 371.1 L1263.1 371.8 L1264.3 373.2 L1265.5 374.2 L1266.7 372.0 L1268.0 370.1 L1269.2 369.3 L1270.4 371.1 L1271.7 371.3 L1272.9 369.5 L1274.1 367.5 L1275.8 361.3 L1277.8 360.3 L1279.0 360.9 L1280.2 362.3 L1281.5 363.1 L1282.7 363.8 L1283.9 364.3 L1285.2 362.8 L1286.4 362.2 L1287.6 362.8 L1288.8 362.7 L1290.1 362.6 L1291.3 362.8 L1292.5 363.7 L1293.7 362.3 L1295.0 362.2 L1296.2 362.8 L1297.4 363.8 L1298.7 365.7 L1299.9 364.2 L1301.1 360.9 L1302.3 360.5 L1303.6 361.7 L1304.8 361.1 L1306.0 359.5 L1307.2 360.5 L1308.5 359.1 L1309.7 359.5 L1310.9 358.4 L1312.1 357.6 L1313.4 354.9 L1314.6 354.3 L1315.8 354.1 L1317.1 355.7 L1318.3 357.4 L1319.5 359.4 L1320.7 358.0 L1322.0 359.0 L1323.2 358.9 L1324.4 359.4 L1325.6 359.0 L1326.9 359.5 L1328.1 359.8 L1329.3 360.7 L1330.5 359.0 L1331.8 358.8 L1333.0 359.0 L1334.2 358.9 L1335.5 358.0 L1336.7 358.1 L1337.9 360.4 L1339.1 360.5 L1340.4 359.1 L1341.6 357.4 L1342.8 359.7 L1344.1 359.5 L1345.3 361.0 L1346.5 360.3 L1347.7 360.3 L1349.0 358.6 L1350.2 360.2 L1351.4 359.8 L1352.6 360.5 L1353.9 360.5 L1355.1 359.7 L1356.3 357.2 L1357.5 357.1 L1358.8 357.7 L1360.0 358.3 L1361.2 359.2 L1362.5 359.7 L1363.7 360.8 L1364.9 362.7 L1366.1 364.1 L1367.4 363.3 L1368.6 363.0 L1369.8 362.6 L1371.5 348.5 L1373.0 341.0 L1374.2 335.7 L1376.0 343.7 L1377.2 343.0 L1378.4 342.5 L1379.6 342.2 L1380.9 343.2 L1382.1 344.6 L1383.3 344.8 L1384.5 346.0 L1385.8 346.1 L1387.0 345.1 L1388.2 342.7 L1389.5 343.7 L1390.7 344.2 L1391.9 343.9 L1393.1 346.1 L1394.4 347.5 L1395.6 347.6 L1396.8 347.6 L1398.0 347.4 L1399.3 345.6 L1400.5 344.5 L1401.7 345.1 L1402.9 343.7 L1404.2 344.3 L1405.4 345.2 L1406.6 344.2 L1407.8 346.2 L1409.3 343.0 L1410.8 343.4 L1412.4 345.6 L1414.0 346.4 L1415.2 344.3 L1416.4 345.0 L1417.7 344.4 L1418.9 347.4 L1420.1 346.5 L1421.3 349.5 L1422.6 349.6 L1423.8 348.2 L1425.0 347.5 L1426.3 345.7 L1427.5 348.0 L1428.7 347.2 L1429.9 347.0 L1431.2 345.6 L1432.4 343.8 L1433.6 346.1 L1434.8 347.8 L1436.1 344.5 L1437.3 344.2 L1438.5 345.1 L1439.8 342.9 L1441.0 344.6 L1442.2 342.4 L1443.4 345.8 L1444.7 345.9 L1445.9 346.8 L1447.1 348.5 L1448.3 346.7 L1449.9 349.0 L1451.5 352.1 L1453.0 351.1 L1454.5 349.5 L1455.7 349.3 L1456.9 348.9 L1458.2 350.8 L1459.4 350.8 L1460.6 351.5 L1461.8 349.7 L1463.1 350.2 L1464.3 347.6 L1465.5 347.7 L1466.7 347.7 L1468.0 346.3 L1469.2 347.3 L1470.4 346.8 L1471.7 347.0 L1472.9 348.2 L1474.1 345.0 L1475.3 346.7 L1476.6 345.2 L1477.8 344.0 L1479.0 344.9 L1480.2 343.1 L1481.5 344.3 L1482.7 342.3 L1483.9 340.1 L1485.2 340.3 L1486.4 338.2 L1487.6 335.7 L1488.8 336.0 L1490.1 331.4 L1491.3 332.4 L1492.5 329.2 L1493.7 329.4 L1495.2 332.8 L1496.7 333.1 L1498.3 334.0 L1499.9 333.3 L1501.6 332.6 L1503.4 333.4 L1504.5 333.2 L1505.7 334.7 L1507.1 335.5 L1508.5 336.8 L1509.9 339.2 L1511.4 337.3 L1512.8 335.4 L1514.2 335.6 L1515.6 335.2 L1517.0 336.3 L1518.5 338.7 L1519.9 339.2 L1521.3 339.9 L1522.7 339.4 L1524.4 342.2 L1526.1 344.2 L1527.5 343.2 L1528.8 344.7 L1530.1 344.7 L1531.4 342.5 L1532.8 344.3 L1534.1 341.5 L1535.2 339.8 L1536.4 338.5 L1537.5 340.8 L1538.6 342.4 L1540.1 343.3 L1541.5 342.7 L1542.6 340.7 L1543.8 338.4 L1545.2 339.9 L1546.6 339.6 L1547.9 338.4 L1549.2 339.0 L1550.6 338.1 L1551.9 340.2 L1553.2 340.3 L1554.5 338.7 L1556.2 341.5 L1558.0 339.6 L1559.4 341.4 L1560.8 341.8 L1562.2 340.3 L1563.6 338.7 L1565.3 341.4 L1567.0 339.3 L1568.4 340.6 L1569.7 342.3 L1571.0 339.5 L1572.4 340.0 L1573.9 342.2 L1575.6 343.6 L1577.3 345.5 L1578.7 347.0 L1580.1 345.9 L1581.5 345.3 L1583.0 344.7 L1584.1 343.4 L1585.2 345.7 L1586.7 346.7 L1588.1 347.4 L1589.3 345.3 L1590.6 347.7 L1591.8 348.3 L1591.8 385.5 L25.4 385.5Z" fill="rgba(69,114,167,0.18)"/><path d="M25 385.5H1591" stroke="#10141f" stroke-width="1.45" fill="none"/><g fill="none" stroke-width="2.15" stroke-linejoin="round" stroke-linecap="round"><path d="M25.4 385.5 L26.8 385.0 L28.2 384.4 L29.6 385.3 L31.0 384.2 L32.3 384.5 L33.5 383.9 L34.7 382.8 L36.4 383.8 L38.0 383.3 L39.6 384.1 L41.1 383.3 L42.6 383.0 L44.0 383.5 L45.5 384.3 L47.0 382.9 L48.5 383.0 L49.9 383.9 L51.4 385.0 L52.9 384.5 L54.4 384.2 L55.9 385.6 L57.4 384.3 L59.0 386.0 L60.5 385.5 L62.1 384.9 L63.8 384.8 L65.4 385.1 L66.6 385.8 L67.9 384.4 L69.1 384.6 L70.6 384.9 L72.0 384.4 L73.5 384.7 L75.0 383.8 L76.4 383.6 L77.9 383.6 L79.4 384.3 L80.9 383.8 L82.3 383.2 L83.8 383.4 L85.3 383.0 L86.7 382.4 L88.2 383.1 L89.7 382.9 L91.2 381.7 L92.5 382.0 L93.9 381.9 L95.2 382.5 L96.6 382.3 L97.8 380.3 L99.0 380.4 L100.2 377.8 L101.7 378.1 L103.1 379.0 L104.5 378.0 L105.9 378.5 L107.4 378.1 L109.0 379.6 L110.5 380.5 L112.0 380.7 L113.6 381.5 L115.1 380.8 L116.6 381.6 L118.2 381.9 L119.6 381.7 L121.1 381.3 L122.6 381.8 L124.0 382.1 L125.5 381.1 L127.0 381.2 L128.5 379.8 L129.9 380.8 L131.4 380.8 L132.9 381.5 L134.4 381.1 L135.9 379.8 L137.5 379.5 L139.0 379.9 L140.7 378.0 L142.3 377.8 L143.9 376.6 L145.6 376.8 L147.2 376.9 L148.8 378.7 L150.5 378.5 L152.1 379.3 L153.7 380.4 L155.2 381.6 L156.6 380.2 L158.0 380.7 L159.5 381.0 L160.9 381.9 L162.3 382.0 L163.8 381.9 L165.3 380.5 L166.7 380.3 L168.2 380.0 L169.7 380.8 L171.2 381.0 L172.6 379.2 L174.1 378.6 L175.6 378.4 L177.1 378.1 L178.3 378.3 L179.5 378.4 L180.7 377.4 L182.0 377.1 L183.2 378.1 L184.4 378.5 L186.0 379.3 L187.5 380.6 L189.0 380.6 L190.6 380.6 L192.1 380.6 L193.6 380.7 L195.2 379.4 L196.7 380.7 L198.2 381.1 L199.6 381.5 L201.1 381.6 L202.6 380.9 L204.1 380.9 L205.6 380.6 L207.1 382.0 L208.6 381.5 L210.2 381.7 L211.4 382.7 L212.6 383.4 L213.9 384.5 L215.1 383.3 L216.3 382.5 L218.0 382.3 L219.6 381.9 L221.2 382.0 L222.7 381.1 L224.2 382.5 L225.6 382.1 L227.1 380.8 L228.6 380.4 L230.1 380.6 L231.5 380.6 L233.0 380.1 L234.5 381.4 L235.9 382.0 L237.5 380.5 L239.1 379.7 L240.9 375.1 L242.1 369.3 L243.3 368.6 L244.5 367.5 L245.8 368.1 L247.0 366.5 L248.2 365.5 L249.4 366.9 L250.7 366.0 L251.9 364.7 L253.5 366.3 L255.1 366.4 L256.3 372.6 L257.8 372.0 L259.3 370.3 L260.5 369.0 L261.7 367.0 L262.9 364.3 L264.2 361.2 L265.4 362.9 L266.6 363.3 L267.9 364.3 L269.1 363.2 L270.3 362.6 L271.5 363.4 L272.8 364.7 L274.0 365.3 L275.2 365.8 L276.4 366.2 L277.7 366.4 L278.9 365.7 L280.1 364.8 L281.4 363.4 L282.6 362.4 L283.8 361.9 L285.0 362.2 L286.3 362.7 L287.5 364.1 L288.7 365.4 L290.3 363.3 L291.9 362.9 L293.6 358.9 L294.8 356.1 L296.1 351.4 L298.0 343.8 L299.5 338.3 L301.2 342.6 L302.3 345.2 L303.4 349.0 L304.7 351.7 L305.9 353.4 L307.1 351.4 L308.3 350.7 L309.6 352.4 L310.8 351.7 L312.0 351.1 L313.2 350.3 L314.5 351.0 L315.7 351.7 L316.9 349.4 L318.2 346.7 L319.4 350.2 L320.6 351.1 L321.8 349.9 L323.1 348.3 L325.0 342.4 L326.8 340.7 L328.5 346.7 L330.4 344.5 L331.7 344.1 L332.9 345.1 L333.9 342.5 L335.3 354.6 L337.1 360.8 L339.0 355.6 L341.0 358.1 L342.5 359.7 L343.9 360.2 L345.2 359.0 L346.4 358.8 L347.6 358.8 L348.8 359.2 L350.1 361.9 L351.3 364.2 L352.5 366.3 L353.7 368.3 L355.0 368.7 L356.2 369.8 L357.4 370.2 L359.4 362.1 L360.5 363.1 L361.6 364.3 L363.6 361.3 L365.5 361.2 L367.2 365.6 L368.5 366.5 L369.7 366.5 L370.9 367.2 L372.1 365.6 L373.4 364.8 L374.6 365.7 L375.8 367.0 L377.3 368.0 L378.8 370.7 L380.0 371.3 L381.2 372.4 L382.8 373.0 L384.4 372.5 L385.6 372.5 L386.9 371.6 L388.1 370.5 L389.6 373.6 L391.0 374.1 L392.3 376.4 L393.5 378.8 L394.7 381.1 L395.9 383.0 L397.5 382.0 L399.1 381.0 L400.4 380.9 L401.6 379.0 L402.8 380.2 L404.1 380.3 L405.3 378.7 L406.5 378.1 L407.7 377.6 L409.0 377.5 L410.2 377.8 L411.4 379.4 L412.6 379.8 L414.1 379.3 L415.6 378.5 L416.8 377.2 L418.0 376.4 L419.6 374.4 L420.9 370.7 L422.1 371.5 L423.3 373.2 L424.5 373.8 L425.8 373.5 L427.0 373.1 L428.2 371.2 L429.4 372.0 L430.7 373.5 L431.9 374.1 L433.4 370.1 L434.8 367.3 L436.3 365.4 L437.8 368.5 L439.3 372.3 L440.5 369.6 L441.7 368.3 L442.9 366.7 L444.2 365.0 L445.4 364.1 L446.6 365.5 L447.9 366.2 L449.1 364.9 L450.3 365.9 L451.5 366.2 L452.8 365.8 L454.0 368.0 L455.2 368.2 L456.4 368.8 L457.7 370.4 L458.9 370.9 L460.1 369.1 L461.4 369.0 L462.6 368.9 L463.8 369.6 L465.0 370.2 L466.3 371.3 L467.7 373.2 L469.2 372.9 L470.4 375.8 L471.7 377.9 L473.3 377.0 L474.9 377.4 L476.1 376.9 L477.3 375.6 L478.5 373.5 L479.8 374.2 L481.0 373.2 L482.2 372.6 L483.4 369.2 L484.7 367.5 L485.9 365.4 L487.1 366.3 L488.3 365.1 L489.6 364.1 L490.8 364.1 L492.0 364.6 L493.2 364.2 L494.5 359.9 L495.7 356.2 L496.9 355.9 L498.2 353.2 L499.4 352.6 L500.6 350.0 L501.8 352.1 L503.1 356.1 L504.3 354.4 L505.5 351.9 L506.8 352.7 L508.0 353.7 L509.2 355.5 L510.4 355.1 L511.7 353.7 L512.9 348.7 L514.1 348.1 L515.3 344.5 L516.8 343.1 L518.3 343.0 L520.2 340.5 L521.5 340.2 L522.7 341.0 L523.9 343.4 L525.1 343.9 L527.1 350.9 L528.2 353.3 L529.3 355.3 L531.3 351.1 L532.5 353.0 L533.7 354.5 L535.0 355.5 L536.2 354.3 L537.8 356.8 L539.4 358.4 L540.0 358.2 L541.9 353.0 L543.8 352.1 L545.6 343.7 L547.5 347.8 L549.4 344.0 L551.2 340.1 L553.1 343.4 L555.0 347.0 L556.5 340.8 L558.1 345.8 L560.0 343.7 L561.9 341.9 L563.8 341.3 L565.6 342.4 L566.9 347.5 L568.1 343.2 L569.8 337.0 L571.2 335.5 L573.1 336.4 L574.4 340.5 L576.2 339.6 L577.5 341.7 L579.4 340.0 L581.2 336.2 L583.1 334.9 L584.8 335.9 L585.6 341.0 L587.2 333.4 L588.5 330.1 L590.0 327.0 L591.5 331.0 L593.1 328.4 L595.0 319.9 L596.5 321.1 L598.1 322.2 L599.8 319.8 L601.2 323.8 L602.5 319.4 L603.8 324.9 L605.0 318.0 L606.2 323.3 L607.5 328.5 L609.4 327.2 L611.0 323.3 L612.5 331.3 L614.4 330.2 L616.2 331.8 L618.1 330.3 L620.0 330.1 L621.9 331.5 L623.5 327.4 L625.0 322.8 L626.9 323.4 L628.8 322.4 L630.6 320.6 L632.2 316.2 L633.8 321.3 L635.6 318.0 L637.2 320.6 L639.4 323.8 L640.6 328.3 L641.5 342.4 L643.1 337.6 L645.0 339.1 L646.9 336.5 L648.5 333.7 L650.0 333.3 L651.9 335.0 L653.8 337.4 L655.0 338.1 L656.2 331.4 L657.5 338.7 L659.4 338.5 L660.6 343.6 L661.9 353.7 L663.1 357.4 L664.4 352.5 L665.6 349.6 L667.5 351.8 L669.4 351.1 L671.2 351.1 L673.1 352.5 L675.0 352.8 L676.9 348.7 L678.8 348.3 L680.6 343.2 L682.5 345.3 L684.4 343.6 L686.2 346.5 L688.1 347.5 L690.0 345.2 L691.5 349.1 L693.1 347.3 L695.0 342.8 L696.9 344.5 L698.5 344.4 L700.0 348.6 L701.9 349.9 L703.8 351.3 L705.6 350.8 L706.9 345.9 L708.1 334.7 L709.4 328.9 L710.6 329.1 L711.9 334.0 L713.5 338.8 L715.0 334.0 L716.5 339.9 L718.1 344.9 L720.0 343.4 L721.5 340.0 L723.1 343.0 L725.0 337.7 L726.5 337.0 L727.8 334.2 L729.4 336.8 L731.0 337.8 L732.5 336.7 L734.0 333.3 L735.6 332.7 L737.2 334.0 L738.8 331.5 L740.0 327.0 L741.2 325.0 L742.5 323.8 L743.8 328.5 L745.0 329.3 L746.2 332.3 L747.5 332.3 L748.8 328.3 L750.0 325.7 L751.2 322.9 L752.5 318.6 L753.8 314.9 L755.0 309.2 L756.2 311.1 L757.5 312.3 L759.1 310.4 L760.6 306.7 L761.9 312.1 L763.1 311.3 L764.4 316.5 L765.6 319.0 L766.9 307.6 L768.1 301.8 L770.0 300.2 L771.4 300.1 L772.8 296.4 L773.9 298.2 L775.0 300.7 L776.2 306.2 L777.5 305.2 L778.8 305.2 L780.0 302.0 L781.2 307.2 L782.5 313.5 L784.1 305.6 L785.6 303.8 L786.9 306.0 L788.1 310.8 L789.4 299.1 L791.2 287.8 L792.5 295.5 L793.8 276.6 L795.6 277.7 L796.9 273.4 L798.1 272.3 L800.0 265.8 L801.9 257.6 L803.8 257.9 L805.6 264.3 L806.9 273.7 L808.8 282.7 L810.0 282.8 L811.9 274.5 L813.1 284.4 L814.8 291.0 L816.2 286.8 L818.1 284.7 L820.0 294.3 L821.9 287.0 L823.1 283.5 L824.4 280.3 L826.2 286.1 L828.1 285.4 L830.0 289.5 L831.1 291.4 L832.2 292.5 L833.8 271.1 L835.6 269.2 L837.5 269.8 L838.8 266.7 L840.0 268.3 L841.2 268.3 L842.5 270.5 L844.4 266.6 L846.2 265.8 L848.1 262.1 L849.4 266.1 L850.6 267.5 L851.9 264.7 L853.1 261.2 L855.0 264.3 L856.2 271.6 L858.1 272.8 L860.0 278.9 L861.9 268.7 L863.1 270.1 L865.0 276.2 L866.2 273.8 L868.1 282.3 L870.0 286.7 L871.9 280.6 L873.8 291.6 L875.2 292.2 L876.5 310.7 L877.6 310.6 L878.8 310.6 L879.9 312.5 L881.0 313.9 L882.5 296.9 L884.4 295.7 L886.5 289.1 L888.1 298.2 L890.0 302.0 L891.9 309.4 L893.1 307.2 L894.4 305.5 L896.2 300.3 L897.8 291.0 L899.4 298.0 L901.2 310.5 L903.1 317.4 L905.0 309.2 L906.2 302.6 L907.5 298.0 L909.4 295.5 L910.6 296.3 L911.9 295.0 L914.0 291.8 L915.1 293.9 L916.2 297.4 L918.1 309.5 L919.4 312.7 L920.6 314.4 L922.8 307.1 L923.9 308.5 L925.0 308.8 L926.2 309.3 L927.5 308.8 L928.8 310.7 L930.0 315.7 L931.2 309.8 L932.5 308.4 L933.6 307.5 L934.8 307.0 L936.9 310.3 L938.3 311.1 L939.8 312.1 L941.1 314.1 L942.4 315.7 L943.8 319.7 L945.0 321.7 L946.2 323.7 L947.5 316.9 L948.8 313.4 L950.0 316.0 L951.2 317.1 L952.5 318.5 L953.8 321.8 L955.0 316.3 L956.2 315.1 L957.5 322.5 L958.8 327.1 L960.0 324.2 L961.2 321.8 L962.5 318.8 L963.8 317.9 L965.0 320.2 L966.2 324.5 L967.5 327.0 L968.8 329.9 L970.0 332.8 L971.2 336.0 L973.0 342.5 L975.0 333.9 L976.2 336.5 L977.5 337.0 L978.8 335.3 L980.0 329.0 L981.2 330.6 L982.5 328.7 L983.8 324.0 L985.0 319.9 L986.2 321.7 L987.5 325.3 L988.8 324.8 L990.0 320.8 L991.2 324.5 L992.5 330.8 L994.5 326.5 L995.8 328.9 L997.0 331.2 L998.2 334.5 L999.5 334.2 L1001.0 333.0 L1002.5 332.0 L1003.8 336.2 L1005.0 337.3 L1006.5 339.6 L1008.0 339.8 L1009.6 338.8 L1011.2 338.8 L1012.9 339.7 L1014.5 337.5 L1016.0 337.1 L1017.5 336.7 L1018.8 336.3 L1020.0 335.6 L1021.2 332.8 L1022.5 332.9 L1023.8 335.4 L1025.4 339.3 L1027.0 339.4 L1028.2 340.7 L1029.5 344.0 L1031.0 345.5 L1032.5 347.5 L1034.0 347.7 L1035.5 350.7 L1037.5 353.3 L1038.8 352.3 L1040.0 350.9 L1041.2 352.4 L1042.5 350.4 L1043.8 351.0 L1045.0 348.9 L1046.2 348.0 L1047.5 349.1 L1048.8 347.5 L1050.0 349.9 L1051.2 349.6 L1052.5 349.1 L1054.1 347.0 L1055.8 345.7 L1057.2 349.1 L1058.8 352.6 L1060.4 352.6 L1062.0 354.6 L1063.5 355.7 L1065.0 358.9 L1066.2 358.6 L1067.5 359.1 L1068.8 360.1 L1070.0 362.0 L1071.2 364.5 L1072.5 366.0 L1073.8 366.4 L1075.0 367.5 L1076.5 365.6 L1078.0 362.4 L1080.0 354.2 L1081.2 357.1 L1082.5 358.3 L1084.0 352.5 L1085.5 350.2 L1086.8 346.5 L1088.0 343.2 L1089.6 341.7 L1091.2 339.8 L1092.5 341.1 L1093.8 343.7 L1095.0 345.5 L1096.2 348.8 L1097.5 345.7 L1098.8 347.2 L1100.0 344.3 L1101.2 340.5 L1102.5 338.6 L1103.8 336.7 L1105.0 332.6 L1106.5 329.4 L1108.0 329.9 L1109.6 329.2 L1111.2 331.3 L1112.5 331.4 L1113.8 334.2 L1115.4 337.7 L1117.0 335.9 L1118.5 338.7 L1120.0 342.2 L1121.5 340.7 L1123.0 336.0 L1124.6 335.0 L1126.2 334.6 L1127.5 340.7 L1128.8 341.8 L1130.4 345.0 L1132.0 347.7 L1133.5 347.4 L1135.0 348.0 L1136.2 349.8 L1137.5 348.9 L1138.8 347.4 L1140.0 348.8 L1141.2 348.1 L1142.5 347.9 L1143.8 346.1 L1145.0 347.5 L1146.2 347.7 L1147.9 349.5 L1149.5 352.7 L1151.0 346.9 L1152.5 343.8 L1153.8 344.0 L1155.0 345.3 L1156.5 348.0 L1158.0 348.8 L1159.6 349.3 L1161.2 350.9 L1162.5 352.4 L1163.8 354.8 L1165.0 354.4 L1166.2 354.6 L1167.4 353.6 L1168.6 354.8 L1169.8 355.8 L1171.0 356.4 L1172.3 355.9 L1173.5 355.9 L1174.7 356.2 L1175.9 357.6 L1177.2 356.5 L1178.4 356.7 L1179.6 357.7 L1180.9 356.5 L1182.1 355.5 L1183.3 355.4 L1184.5 356.8 L1185.8 356.7 L1187.0 357.1 L1188.2 356.0 L1189.4 353.8 L1190.7 349.1 L1191.9 348.2 L1193.1 348.1 L1194.4 349.4 L1195.6 351.8 L1196.8 352.7 L1198.0 352.9 L1199.3 354.0 L1200.5 355.4 L1201.7 356.3 L1202.9 357.2 L1204.2 358.2 L1205.4 357.4 L1206.6 355.6 L1207.8 356.6 L1209.1 356.2 L1210.3 357.2 L1211.5 357.4 L1212.8 358.4 L1214.0 357.6 L1215.2 357.7 L1216.4 357.4 L1217.7 356.9 L1218.9 358.3 L1220.1 358.8 L1221.4 359.0 L1222.6 359.8 L1224.2 362.7 L1225.8 363.6 L1227.2 362.4 L1228.7 363.1 L1229.9 362.9 L1231.2 363.4 L1232.4 361.5 L1233.6 362.7 L1234.8 364.3 L1236.1 365.4 L1237.3 366.0 L1238.5 364.7 L1239.8 365.2 L1241.0 365.9 L1242.2 367.0 L1243.4 369.7 L1244.7 370.3 L1245.9 371.9 L1247.1 371.9 L1248.3 373.3 L1249.6 373.3 L1250.8 373.4 L1252.0 373.5 L1253.3 373.3 L1254.5 370.8 L1255.7 372.0 L1256.9 372.8 L1258.2 372.6 L1259.4 372.3 L1260.6 371.5 L1261.8 371.1 L1263.1 371.8 L1264.3 373.2 L1265.5 374.2 L1266.7 372.0 L1268.0 370.1 L1269.2 369.3 L1270.4 371.1 L1271.7 371.3 L1272.9 369.5 L1274.1 367.5 L1275.8 361.3 L1277.8 360.3 L1279.0 360.9 L1280.2 362.3 L1281.5 363.1 L1282.7 363.8 L1283.9 364.3 L1285.2 362.8 L1286.4 362.2 L1287.6 362.8 L1288.8 362.7 L1290.1 362.6 L1291.3 362.8 L1292.5 363.7 L1293.7 362.3 L1295.0 362.2 L1296.2 362.8 L1297.4 363.8 L1298.7 365.7 L1299.9 364.2 L1301.1 360.9 L1302.3 360.5 L1303.6 361.7 L1304.8 361.1 L1306.0 359.5 L1307.2 360.5 L1308.5 359.1 L1309.7 359.5 L1310.9 358.4 L1312.1 357.6 L1313.4 354.9 L1314.6 354.3 L1315.8 354.1 L1317.1 355.7 L1318.3 357.4 L1319.5 359.4 L1320.7 358.0 L1322.0 359.0 L1323.2 358.9 L1324.4 359.4 L1325.6 359.0 L1326.9 359.5 L1328.1 359.8 L1329.3 360.7 L1330.5 359.0 L1331.8 358.8 L1333.0 359.0 L1334.2 358.9 L1335.5 358.0 L1336.7 358.1 L1337.9 360.4 L1339.1 360.5 L1340.4 359.1 L1341.6 357.4 L1342.8 359.7 L1344.1 359.5 L1345.3 361.0 L1346.5 360.3 L1347.7 360.3 L1349.0 358.6 L1350.2 360.2 L1351.4 359.8 L1352.6 360.5 L1353.9 360.5 L1355.1 359.7 L1356.3 357.2 L1357.5 357.1 L1358.8 357.7 L1360.0 358.3 L1361.2 359.2 L1362.5 359.7 L1363.7 360.8 L1364.9 362.7 L1366.1 364.1 L1367.4 363.3 L1368.6 363.0 L1369.8 362.6 L1371.5 348.5 L1373.0 341.0 L1374.2 335.7 L1376.0 343.7 L1377.2 343.0 L1378.4 342.5 L1379.6 342.2 L1380.9 343.2 L1382.1 344.6 L1383.3 344.8 L1384.5 346.0 L1385.8 346.1 L1387.0 345.1 L1388.2 342.7 L1389.5 343.7 L1390.7 344.2 L1391.9 343.9 L1393.1 346.1 L1394.4 347.5 L1395.6 347.6 L1396.8 347.6 L1398.0 347.4 L1399.3 345.6 L1400.5 344.5 L1401.7 345.1 L1402.9 343.7 L1404.2 344.3 L1405.4 345.2 L1406.6 344.2 L1407.8 346.2 L1409.3 343.0 L1410.8 343.4 L1412.4 345.6 L1414.0 346.4 L1415.2 344.3 L1416.4 345.0 L1417.7 344.4 L1418.9 347.4 L1420.1 346.5 L1421.3 349.5 L1422.6 349.6 L1423.8 348.2 L1425.0 347.5 L1426.3 345.7 L1427.5 348.0 L1428.7 347.2 L1429.9 347.0 L1431.2 345.6 L1432.4 343.8 L1433.6 346.1 L1434.8 347.8 L1436.1 344.5 L1437.3 344.2 L1438.5 345.1 L1439.8 342.9 L1441.0 344.6 L1442.2 342.4 L1443.4 345.8 L1444.7 345.9 L1445.9 346.8 L1447.1 348.5 L1448.3 346.7 L1449.9 349.0 L1451.5 352.1 L1453.0 351.1 L1454.5 349.5 L1455.7 349.3 L1456.9 348.9 L1458.2 350.8 L1459.4 350.8 L1460.6 351.5 L1461.8 349.7 L1463.1 350.2 L1464.3 347.6 L1465.5 347.7 L1466.7 347.7 L1468.0 346.3 L1469.2 347.3 L1470.4 346.8 L1471.7 347.0 L1472.9 348.2 L1474.1 345.0 L1475.3 346.7 L1476.6 345.2 L1477.8 344.0 L1479.0 344.9 L1480.2 343.1 L1481.5 344.3 L1482.7 342.3 L1483.9 340.1 L1485.2 340.3 L1486.4 338.2 L1487.6 335.7 L1488.8 336.0 L1490.1 331.4 L1491.3 332.4 L1492.5 329.2 L1493.7 329.4 L1495.2 332.8 L1496.7 333.1 L1498.3 334.0 L1499.9 333.3 L1501.6 332.6 L1503.4 333.4 L1504.5 333.2 L1505.7 334.7 L1507.1 335.5 L1508.5 336.8 L1509.9 339.2 L1511.4 337.3 L1512.8 335.4 L1514.2 335.6 L1515.6 335.2 L1517.0 336.3 L1518.5 338.7 L1519.9 339.2 L1521.3 339.9 L1522.7 339.4 L1524.4 342.2 L1526.1 344.2 L1527.5 343.2 L1528.8 344.7 L1530.1 344.7 L1531.4 342.5 L1532.8 344.3 L1534.1 341.5 L1535.2 339.8 L1536.4 338.5 L1537.5 340.8 L1538.6 342.4 L1540.1 343.3 L1541.5 342.7 L1542.6 340.7 L1543.8 338.4 L1545.2 339.9 L1546.6 339.6 L1547.9 338.4 L1549.2 339.0 L1550.6 338.1 L1551.9 340.2 L1553.2 340.3 L1554.5 338.7 L1556.2 341.5 L1558.0 339.6 L1559.4 341.4 L1560.8 341.8 L1562.2 340.3 L1563.6 338.7 L1565.3 341.4 L1567.0 339.3 L1568.4 340.6 L1569.7 342.3 L1571.0 339.5 L1572.4 340.0 L1573.9 342.2 L1575.6 343.6 L1577.3 345.5 L1578.7 347.0 L1580.1 345.9 L1581.5 345.3 L1583.0 344.7 L1584.1 343.4 L1585.2 345.7 L1586.7 346.7 L1588.1 347.4 L1589.3 345.3 L1590.6 347.7 L1591.8 348.3" stroke="#4572A7"/><path d="M25.4 383.3 L27.0 381.7 L28.6 380.5 L30.1 379.7 L31.7 378.9 L33.2 378.2 L34.7 377.9 L35.9 378.0 L37.2 378.8 L38.4 379.9 L40.0 379.5 L41.7 379.2 L43.3 378.6 L44.8 378.3 L46.4 378.9 L47.9 379.2 L49.5 380.0 L51.0 379.6 L52.5 379.1 L54.0 379.4 L55.6 379.8 L56.8 379.6 L58.0 381.1 L59.3 380.8 L60.8 380.9 L62.3 380.8 L63.9 381.6 L65.4 382.0 L66.6 381.3 L67.9 380.1 L69.1 380.1 L70.6 379.8 L72.0 379.7 L73.5 380.8 L75.0 380.9 L76.4 381.2 L77.9 380.8 L79.4 380.8 L80.9 379.8 L82.3 379.8 L83.8 379.3 L85.0 379.1 L86.3 378.1 L87.5 378.0 L89.0 378.2 L90.6 378.2 L92.1 378.3 L93.6 379.2 L95.2 377.7 L96.7 378.0 L98.2 376.3 L99.8 375.2 L101.3 375.4 L102.8 376.7 L104.4 376.4 L105.9 376.1 L107.4 375.9 L109.0 375.8 L110.5 376.7 L112.0 376.9 L113.6 377.3 L115.1 377.7 L116.6 377.1 L118.2 377.9 L119.6 377.4 L121.1 377.6 L122.6 377.4 L124.0 377.2 L125.5 375.7 L127.0 376.4 L128.5 376.5 L129.9 376.4 L131.4 375.0 L132.9 374.7 L134.4 374.1 L135.9 373.5 L137.5 374.2 L139.0 374.0 L140.7 373.2 L142.3 372.7 L143.9 371.9 L145.6 372.0 L147.2 372.2 L148.8 372.8 L150.5 374.7 L152.1 375.1 L153.7 376.1 L155.3 376.1 L156.8 375.5 L158.3 375.5 L159.9 375.5 L161.4 376.1 L162.8 375.7 L164.3 375.5 L165.8 376.3 L167.2 375.9 L168.6 375.9 L170.0 375.4 L171.4 374.2 L172.9 374.2 L174.3 374.0 L175.7 374.2 L177.1 373.4 L178.5 373.8 L179.9 373.7 L181.3 373.3 L182.7 374.2 L184.1 373.4 L185.5 374.2 L186.9 373.6 L188.3 373.0 L189.7 373.0 L191.1 373.7 L192.5 374.0 L193.9 372.6 L195.3 372.8 L196.7 372.7 L198.2 373.3 L199.6 372.7 L201.1 373.1 L202.6 373.1 L204.1 373.9 L205.6 373.6 L207.1 374.7 L208.6 374.2 L210.2 374.3 L211.8 375.1 L213.5 375.1 L215.1 374.7 L216.7 374.5 L218.4 373.2 L220.0 373.3 L221.6 373.1 L223.3 373.0 L224.9 372.6 L226.5 371.5 L228.2 370.8 L229.8 370.1 L231.4 370.6 L232.9 369.3 L234.4 370.0 L235.9 368.8 L237.6 368.3 L239.2 368.0 L240.9 368.5 L242.5 368.5 L244.1 368.6 L245.8 369.6 L247.3 368.6 L248.8 368.5 L250.4 368.4 L251.9 368.5 L253.5 368.3 L255.2 367.9 L256.8 367.2 L258.4 366.7 L260.1 366.0 L261.7 366.5 L262.9 365.9 L264.2 365.4 L265.4 364.0 L267.0 364.6 L268.7 365.4 L270.3 365.6 L271.8 364.8 L273.4 365.0 L274.9 365.5 L276.4 364.7 L278.1 364.0 L279.7 363.7 L281.4 363.9 L283.0 363.8 L284.6 362.5 L286.3 361.9 L287.9 362.1 L289.5 362.4 L291.2 362.9 L292.4 361.2 L293.6 360.2 L294.9 358.8 L296.1 359.8 L297.3 359.0 L298.5 356.7 L299.8 359.1 L301.0 358.1 L302.2 359.1 L303.4 361.2 L304.7 361.9 L305.9 362.6 L307.5 361.7 L309.2 360.9 L310.8 361.3 L312.4 360.7 L314.1 360.9 L315.7 361.5 L317.3 359.8 L319.0 359.4 L320.6 359.2 L322.2 358.7 L323.9 357.8 L325.5 357.4 L326.7 356.2 L328.0 354.6 L329.2 354.6 L330.4 355.4 L331.7 357.1 L332.9 358.6 L334.4 361.4 L335.8 365.0 L337.4 363.5 L339.0 361.2 L340.2 360.4 L341.5 360.6 L342.7 360.6 L344.3 360.4 L346.0 360.1 L347.6 360.1 L348.8 360.9 L350.1 361.8 L351.3 362.5 L352.5 363.2 L353.7 364.5 L355.0 364.8 L356.6 364.8 L358.2 365.1 L359.9 364.8 L361.5 364.9 L363.2 364.4 L364.8 364.7 L366.0 365.4 L367.2 366.4 L368.5 366.8 L370.1 366.3 L371.7 365.9 L373.4 364.1 L375.0 364.7 L376.6 365.2 L378.3 364.8 L379.9 365.3 L381.6 366.4 L383.2 365.6 L384.4 365.8 L385.6 365.1 L386.9 365.7 L388.1 367.2 L389.3 367.7 L390.6 368.1 L391.8 369.8 L393.0 371.1 L394.2 372.6 L395.9 372.8 L397.5 373.3 L399.1 374.0 L400.4 374.1 L401.6 374.2 L402.8 375.3 L404.0 373.5 L405.3 373.0 L406.5 371.7 L407.7 372.7 L409.0 372.5 L410.2 374.1 L411.4 374.0 L412.6 374.0 L413.9 374.7 L415.5 376.5 L417.1 377.6 L418.3 377.3 L419.6 376.6 L420.9 375.8 L422.1 374.2 L423.3 374.6 L424.5 375.2 L425.8 376.5 L427.0 377.6 L428.2 377.7 L429.4 377.7 L430.7 378.0 L431.9 377.1 L433.1 376.4 L434.4 375.5 L435.6 375.7 L436.8 375.3 L438.0 376.0 L439.3 376.5 L440.5 377.4 L441.7 375.8 L442.9 375.6 L444.2 373.8 L445.4 374.9 L446.6 376.0 L447.9 376.9 L449.1 377.0 L450.3 377.2 L451.5 378.0 L452.8 377.7 L454.0 378.9 L455.2 378.6 L456.8 378.7 L458.5 377.6 L460.1 377.1 L461.5 377.4 L462.9 378.1 L464.3 378.3 L465.8 378.5 L467.2 380.0 L468.7 380.2 L469.9 380.9 L471.2 381.7 L472.4 382.8 L473.6 383.2 L474.8 383.9 L476.1 384.4 L477.3 383.2 L478.5 383.1 L479.8 382.4 L481.0 380.6 L482.2 380.8 L483.4 380.4 L484.7 380.0 L485.9 378.7 L487.1 379.2 L488.3 378.6 L489.6 377.2 L490.8 376.4 L492.0 375.9 L493.3 374.1 L494.5 371.6 L495.7 369.0 L496.9 366.6 L498.2 365.9 L499.4 366.2 L500.6 364.8 L501.8 364.6 L503.1 366.0 L504.3 366.5 L505.5 365.5 L506.8 366.9 L508.0 366.8 L509.2 366.0 L510.4 364.9 L511.7 364.2 L512.9 363.4 L514.1 362.7 L515.3 360.4 L516.6 361.0 L517.8 360.5 L519.0 360.8 L520.2 361.1 L521.5 363.0 L522.7 363.7 L523.9 364.1 L525.1 365.0 L526.4 366.3 L527.6 368.3 L528.8 369.1 L530.1 369.3 L531.3 368.5 L532.5 368.7 L533.7 369.5 L535.0 370.2 L536.2 371.3 L537.4 370.1 L538.7 371.0 L539.9 370.7 L540.0 371.4 L541.9 369.7 L543.8 368.2 L545.6 366.1 L547.5 366.7 L549.4 366.1 L551.0 362.9 L552.5 365.7 L554.4 367.2 L556.2 364.9 L558.1 366.9 L560.0 366.7 L561.9 366.8 L563.8 364.9 L565.6 368.7 L567.5 370.3 L569.4 369.4 L571.2 368.7 L573.1 365.2 L575.0 367.2 L576.9 366.6 L578.8 365.3 L580.6 365.3 L582.5 363.0 L584.4 363.4 L586.2 365.0 L588.1 365.2 L590.0 365.5 L591.9 365.2 L593.8 364.0 L595.6 363.8 L597.5 366.2 L599.4 364.3 L601.2 364.8 L603.1 363.0 L605.0 362.5 L606.9 363.0 L608.8 364.2 L610.6 365.4 L612.5 365.7 L614.4 366.8 L616.2 366.0 L618.1 365.0 L620.0 364.0 L621.9 363.8 L623.8 363.0 L625.6 363.9 L627.5 360.5 L629.4 361.4 L631.2 361.5 L633.1 359.9 L635.0 357.3 L636.9 357.4 L638.8 357.0 L640.0 359.1 L641.2 369.4 L642.5 366.7 L644.4 364.3 L646.2 362.9 L648.1 362.8 L650.0 360.1 L651.9 360.5 L653.8 363.0 L655.6 359.2 L657.5 361.1 L659.4 364.4 L661.0 367.1 L662.5 370.2 L664.4 369.3 L666.2 369.0 L668.1 367.5 L670.0 366.5 L671.9 365.4 L673.8 366.5 L675.6 367.0 L677.5 366.8 L679.4 365.4 L681.2 365.5 L683.1 364.6 L685.0 363.1 L686.9 363.1 L688.8 362.6 L690.6 364.7 L692.2 365.2 L693.8 363.5 L695.6 362.8 L697.5 363.9 L699.4 361.2 L701.2 361.2 L703.1 359.7 L705.0 359.0 L706.9 358.6 L708.1 353.5 L709.4 349.0 L710.6 345.4 L712.2 344.0 L713.8 350.0 L715.0 348.2 L716.5 348.7 L718.1 352.0 L720.0 347.8 L721.9 346.1 L723.8 345.8 L725.6 347.6 L727.5 344.8 L729.4 345.7 L731.2 344.6 L733.1 343.7 L735.0 345.1 L736.9 345.1 L738.8 350.0 L740.4 347.2 L742.0 348.8 L743.6 346.4 L744.8 346.0 L746.0 348.4 L747.2 347.9 L748.5 348.1 L749.7 345.6 L750.9 343.6 L752.1 346.4 L753.4 347.3 L754.6 348.3 L755.8 347.4 L757.1 344.4 L758.3 345.1 L759.5 344.9 L760.7 343.3 L762.0 344.0 L763.2 342.4 L764.4 344.8 L765.6 344.8 L766.9 341.7 L768.1 340.5 L769.3 342.0 L770.6 342.6 L771.8 339.8 L773.0 339.5 L774.2 341.5 L775.5 340.4 L776.7 343.0 L777.9 341.7 L779.1 339.5 L780.4 339.6 L782.1 340.3 L783.8 339.8 L785.0 338.5 L786.2 334.7 L787.5 334.5 L788.8 332.2 L790.0 331.7 L791.2 330.6 L792.5 330.3 L793.8 330.4 L795.0 332.1 L796.5 331.8 L798.0 330.2 L799.6 331.2 L801.2 331.9 L802.9 327.1 L804.5 326.2 L805.8 326.6 L807.0 327.7 L808.5 328.5 L810.0 331.6 L811.2 335.5 L812.5 337.9 L813.8 339.5 L815.0 338.5 L816.2 338.9 L817.5 340.8 L818.8 340.0 L820.0 341.3 L821.2 341.8 L822.5 341.9 L823.8 341.0 L825.0 338.4 L826.2 337.2 L827.5 338.0 L828.8 338.9 L830.0 340.2 L831.2 341.8 L832.5 342.9 L833.8 339.5 L835.0 341.0 L836.2 340.8 L837.5 340.6 L838.8 339.2 L840.0 337.4 L841.2 338.7 L842.5 338.7 L843.8 338.0 L845.0 338.0 L846.2 335.6 L847.5 333.5 L848.8 334.7 L850.0 335.7 L851.2 333.7 L852.5 335.5 L853.8 336.9 L855.0 335.0 L856.2 336.2 L857.5 337.2 L858.8 337.0 L860.0 336.6 L861.2 337.1 L862.5 339.4 L863.8 339.7 L865.0 338.4 L866.2 336.6 L867.5 339.2 L868.8 340.1 L870.0 338.8 L871.2 339.4 L872.5 340.4 L873.8 340.5 L875.4 342.4 L877.0 345.0 L878.5 344.1 L880.0 341.5 L881.2 340.8 L882.5 340.2 L883.8 341.6 L885.0 341.3 L886.2 342.2 L887.5 342.2 L888.8 342.9 L890.0 342.1 L891.2 341.8 L892.5 344.4 L893.8 342.5 L895.0 340.6 L896.2 342.7 L897.5 344.2 L898.8 342.8 L900.0 344.1 L901.2 343.7 L902.5 344.4 L903.8 342.6 L905.0 341.9 L906.2 345.0 L907.5 345.1 L908.8 343.6 L910.0 343.3 L911.2 342.1 L912.5 343.5 L913.8 342.4 L915.0 344.5 L916.2 344.7 L917.5 345.2 L918.8 346.0 L920.0 343.9 L921.2 342.8 L922.5 342.8 L923.8 342.5 L925.0 341.9 L926.2 341.7 L927.5 343.4 L928.8 345.0 L930.0 343.5 L931.2 344.5 L932.5 344.3 L933.8 340.6 L935.0 340.9 L936.2 339.7 L937.5 339.2 L938.8 342.6 L940.0 341.5 L941.2 342.4 L942.5 343.2 L943.8 344.7 L945.0 344.5 L946.2 343.9 L947.5 344.3 L948.8 343.6 L950.0 346.5 L951.2 347.6 L952.5 345.5 L953.8 344.8 L955.0 345.7 L956.2 346.7 L957.5 349.4 L958.8 350.5 L960.0 350.6 L961.2 348.1 L962.5 350.2 L963.8 350.2 L965.0 349.7 L966.2 350.6 L967.5 348.6 L968.8 349.0 L970.0 351.6 L971.2 355.1 L972.5 357.1 L973.8 358.3 L975.0 361.4 L976.2 360.1 L977.5 356.6 L978.8 357.1 L980.0 357.4 L981.2 357.2 L982.5 358.6 L983.8 358.0 L985.0 358.3 L986.2 358.3 L987.5 360.4 L988.8 358.8 L990.4 363.6 L992.0 365.4 L993.2 361.6 L994.5 361.5 L996.0 360.6 L997.5 363.1 L998.8 363.5 L1000.0 363.9 L1001.2 361.8 L1002.5 361.7 L1003.8 360.4 L1005.0 362.2 L1006.2 361.6 L1007.5 360.2 L1008.8 358.8 L1010.0 357.8 L1011.2 358.3 L1012.5 357.1 L1013.8 356.7 L1015.0 354.8 L1016.2 354.0 L1017.5 352.7 L1018.8 353.6 L1020.0 352.7 L1021.2 351.6 L1022.5 353.7 L1023.8 352.5 L1025.0 353.3 L1026.2 353.3 L1027.5 354.2 L1028.8 356.3 L1030.0 356.1 L1031.2 356.2 L1032.5 357.6 L1033.8 358.2 L1035.0 360.2 L1036.2 359.1 L1037.5 360.6 L1038.8 359.3 L1040.0 360.2 L1041.2 359.7 L1042.5 358.3 L1043.8 358.8 L1045.0 358.8 L1046.2 358.9 L1047.5 359.3 L1048.8 360.2 L1050.0 362.1 L1051.2 362.2 L1052.5 361.9 L1053.8 359.9 L1055.0 360.5 L1056.2 362.5 L1057.5 361.8 L1058.8 363.4 L1060.0 363.5 L1061.2 365.3 L1062.5 364.5 L1063.8 366.0 L1065.0 366.1 L1066.2 366.3 L1067.5 366.6 L1068.8 368.3 L1070.0 369.2 L1071.2 369.7 L1072.5 371.1 L1073.8 370.5 L1075.0 368.5 L1076.2 368.0 L1077.5 366.6 L1078.8 365.6 L1080.0 366.8 L1081.2 367.2 L1082.5 366.6 L1083.8 365.2 L1085.0 364.2 L1086.2 364.5 L1087.5 363.8 L1088.8 362.6 L1090.0 361.6 L1091.2 363.0 L1092.5 363.8 L1093.8 364.6 L1095.0 364.4 L1096.2 363.7 L1097.5 363.3 L1098.8 364.3 L1100.0 363.3 L1101.2 363.6 L1102.5 361.3 L1103.8 362.5 L1105.0 360.9 L1106.2 361.7 L1107.5 361.5 L1108.8 359.8 L1110.0 357.8 L1111.2 360.0 L1112.5 358.9 L1113.8 360.5 L1115.0 359.5 L1116.2 359.5 L1117.5 360.9 L1118.8 360.0 L1120.0 359.1 L1121.2 359.6 L1122.5 360.5 L1123.8 359.1 L1125.0 359.9 L1126.2 359.6 L1127.5 359.5 L1128.8 359.1 L1130.0 360.9 L1131.2 362.0 L1132.5 362.5 L1133.8 361.6 L1135.0 362.4 L1136.2 361.3 L1137.5 361.5 L1138.8 359.7 L1140.0 360.9 L1141.2 361.3 L1142.5 360.3 L1143.8 359.9 L1145.0 359.8 L1146.2 359.6 L1147.5 359.2 L1148.8 361.4 L1150.0 360.8 L1151.2 360.6 L1152.5 360.6 L1153.8 361.1 L1155.0 362.9 L1156.2 361.8 L1157.5 361.9 L1158.8 363.6 L1160.0 363.4 L1161.2 363.4 L1162.5 365.0 L1163.8 365.8 L1165.0 366.3 L1166.2 366.4 L1167.4 365.1 L1168.6 365.7 L1169.8 365.1 L1171.0 363.4 L1172.3 363.8 L1173.5 365.0 L1174.7 365.7 L1175.9 365.1 L1177.2 364.6 L1178.4 364.7 L1179.6 364.0 L1180.9 364.3 L1182.1 364.6 L1183.3 363.9 L1184.5 364.7 L1185.8 365.4 L1187.0 363.7 L1188.2 363.9 L1189.5 363.6 L1190.7 362.3 L1191.9 361.8 L1193.1 362.3 L1194.4 362.6 L1195.6 363.1 L1196.8 364.8 L1198.0 365.5 L1199.3 365.6 L1200.5 366.0 L1201.7 366.7 L1202.9 367.4 L1204.2 369.0 L1205.4 368.7 L1206.6 368.6 L1207.8 368.2 L1209.1 368.7 L1210.3 367.9 L1211.5 368.8 L1212.8 369.4 L1214.0 369.3 L1215.2 368.0 L1216.4 368.6 L1217.7 369.5 L1218.9 369.8 L1220.1 370.6 L1221.4 370.6 L1222.6 371.6 L1223.8 372.0 L1225.0 371.5 L1226.3 371.7 L1227.5 372.3 L1228.7 371.8 L1229.9 371.4 L1231.2 371.3 L1232.4 371.7 L1233.6 372.1 L1234.8 371.9 L1236.1 370.4 L1237.3 370.8 L1238.5 370.8 L1239.8 371.7 L1241.0 371.6 L1242.2 372.3 L1243.4 373.3 L1244.7 373.4 L1245.9 373.3 L1247.1 373.9 L1248.3 374.2 L1250.0 375.4 L1251.6 375.0 L1253.2 375.3 L1254.9 376.0 L1256.5 375.6 L1258.2 376.3 L1259.4 377.3 L1260.6 377.1 L1261.8 377.0 L1263.1 377.7 L1264.3 378.3 L1265.5 378.3 L1266.7 377.5 L1268.0 376.8 L1269.2 376.3 L1270.4 377.0 L1271.7 377.3 L1272.9 377.6 L1274.1 375.9 L1275.3 375.1 L1276.6 374.3 L1277.8 373.7 L1279.0 373.1 L1280.2 372.6 L1281.5 371.7 L1282.7 371.9 L1283.9 371.4 L1285.2 371.6 L1286.4 371.9 L1287.6 371.9 L1288.8 371.2 L1290.1 370.6 L1291.3 370.2 L1292.5 371.0 L1293.7 371.3 L1295.0 372.0 L1296.2 371.4 L1297.4 371.8 L1298.7 372.8 L1299.9 371.5 L1301.1 371.3 L1302.3 370.7 L1303.6 370.1 L1304.8 370.8 L1306.0 369.8 L1307.2 370.1 L1308.5 369.2 L1309.7 368.6 L1310.9 369.7 L1312.1 369.1 L1313.4 368.2 L1314.6 368.9 L1315.8 369.4 L1317.1 370.3 L1318.3 369.9 L1319.5 370.4 L1320.7 372.0 L1322.0 372.1 L1323.2 371.3 L1324.4 371.6 L1325.6 372.0 L1326.9 372.9 L1328.1 373.3 L1329.3 373.9 L1330.6 374.3 L1331.8 374.1 L1333.0 374.0 L1334.2 373.8 L1335.5 373.6 L1336.7 373.0 L1337.9 373.1 L1339.1 372.8 L1340.4 373.8 L1341.6 373.3 L1342.8 374.8 L1344.0 373.9 L1345.3 374.9 L1346.5 375.0 L1347.7 375.4 L1349.0 376.5 L1350.2 376.6 L1351.4 376.4 L1352.6 377.0 L1353.9 377.5 L1355.1 377.3 L1356.3 377.0 L1357.5 377.2 L1358.8 377.7 L1360.0 378.6 L1361.2 378.5 L1362.5 378.9 L1363.7 379.4 L1364.9 379.6 L1366.1 379.3 L1367.4 379.8 L1368.6 379.8 L1370.5 375.7 L1372.3 362.0 L1374.0 356.3 L1376.0 365.1 L1377.2 364.1 L1378.4 364.5 L1379.6 364.2 L1380.9 363.4 L1382.1 365.5 L1383.3 364.8 L1384.5 365.2 L1385.8 364.8 L1387.0 364.7 L1388.2 361.3 L1389.5 359.8 L1390.7 362.6 L1391.9 362.4 L1393.1 362.8 L1394.4 364.8 L1395.6 365.7 L1396.8 366.2 L1398.0 365.8 L1399.3 364.8 L1400.5 365.6 L1401.7 364.5 L1402.9 364.2 L1404.2 364.3 L1405.4 363.4 L1406.6 363.0 L1407.9 363.2 L1409.1 362.5 L1410.3 363.6 L1411.5 364.5 L1412.8 365.4 L1414.0 365.6 L1415.2 366.3 L1416.4 366.8 L1417.7 367.5 L1418.9 367.1 L1420.1 367.2 L1421.3 367.0 L1422.6 366.3 L1423.8 366.2 L1425.0 366.8 L1426.3 367.2 L1427.5 365.5 L1428.7 365.1 L1429.9 365.5 L1431.2 363.8 L1432.4 363.5 L1433.6 365.2 L1434.8 365.4 L1436.1 364.8 L1437.3 363.3 L1438.5 364.4 L1439.8 364.0 L1441.0 363.9 L1442.2 363.9 L1443.4 363.3 L1444.7 362.6 L1445.9 362.2 L1447.1 362.7 L1448.7 363.8 L1450.3 364.5 L1452.0 369.3 L1453.2 367.9 L1454.5 367.5 L1455.7 367.5 L1456.9 366.9 L1458.2 368.0 L1459.4 367.1 L1460.6 365.4 L1461.8 365.4 L1463.1 366.0 L1464.3 365.0 L1465.5 365.4 L1466.7 363.6 L1468.0 363.7 L1469.2 364.6 L1470.4 365.0 L1471.7 365.6 L1472.9 365.2 L1474.1 365.4 L1475.3 365.4 L1476.6 364.5 L1477.8 365.1 L1479.0 364.8 L1480.2 365.8 L1481.5 364.9 L1482.7 364.1 L1483.9 363.0 L1485.2 363.0 L1486.4 364.8 L1487.6 363.5 L1488.8 362.6 L1490.1 362.3 L1491.3 363.0 L1492.5 363.7 L1493.7 362.8 L1495.0 362.7 L1496.2 360.0 L1497.4 358.9 L1498.7 360.5 L1500.0 358.8 L1501.7 360.6 L1503.4 360.6 L1505.1 359.3 L1506.8 358.8 L1508.5 357.3 L1510.2 358.3 L1511.9 355.7 L1513.6 352.6 L1514.8 352.5 L1515.9 352.0 L1517.3 352.0 L1518.8 354.8 L1520.5 353.1 L1522.2 352.5 L1523.9 351.1 L1525.6 351.0 L1527.0 349.5 L1528.4 348.1 L1530.1 349.4 L1531.8 348.9 L1533.5 349.4 L1535.2 352.2 L1536.9 350.6 L1538.6 347.6 L1539.8 347.6 L1540.9 348.2 L1542.3 348.0 L1543.8 349.7 L1545.2 347.7 L1546.6 347.5 L1548.0 349.5 L1549.4 349.5 L1550.8 350.9 L1552.3 353.8 L1553.7 352.0 L1555.1 351.5 L1556.8 349.8 L1558.5 348.8 L1560.2 349.9 L1561.9 350.3 L1563.3 351.5 L1564.8 349.5 L1566.5 348.9 L1568.2 346.9 L1569.9 346.7 L1571.6 345.6 L1573.3 346.0 L1575.0 345.6 L1576.7 345.8 L1578.4 347.7 L1580.1 347.3 L1581.8 347.2 L1583.5 346.7 L1585.2 346.5 L1586.9 346.5 L1588.6 346.0 L1590.2 347.2 L1591.8 346.7" stroke="#AA4643"/><path d="M25.4 387.5 L26.9 387.8 L28.3 389.3 L29.8 389.4 L31.2 389.6 L32.6 390.5 L34.0 389.8 L35.4 390.2 L36.8 390.9 L38.2 391.1 L39.6 390.3 L41.0 390.3 L42.4 390.7 L43.8 390.2 L45.2 390.9 L46.6 389.9 L48.0 390.6 L49.5 390.1 L50.9 389.6 L52.3 389.8 L53.7 389.4 L55.1 390.1 L56.5 389.6 L57.9 390.4 L59.3 390.2 L60.7 389.9 L62.1 389.7 L63.5 390.3 L64.9 390.0 L66.3 390.9 L67.7 390.1 L69.1 390.6 L70.5 390.5 L71.9 389.9 L73.3 390.3 L74.7 389.7 L76.1 389.8 L77.5 389.6 L78.9 389.0 L80.3 388.9 L81.7 388.5 L83.1 388.5 L84.5 389.4 L85.9 388.9 L87.3 389.2 L88.7 388.4 L90.2 388.3 L91.7 387.4 L93.1 386.9 L94.6 387.4 L96.1 387.8 L97.5 387.9 L99.0 387.8 L100.5 387.5 L102.0 388.2 L103.4 387.7 L104.8 387.9 L106.2 388.8 L107.6 388.9 L109.0 389.2 L110.4 389.4 L111.8 388.5 L113.2 388.5 L114.7 388.3 L116.1 389.3 L117.5 389.6 L118.9 389.4 L120.3 389.5 L121.7 390.0 L123.1 390.3 L124.5 389.8 L125.9 390.6 L127.3 390.1 L128.7 390.5 L130.1 390.0 L131.5 389.9 L132.9 391.1 L134.4 391.2 L135.8 391.3 L137.3 390.4 L138.8 390.3 L140.2 390.5 L141.7 390.3 L143.2 390.2 L144.7 390.1 L146.1 389.4 L147.6 389.5 L149.0 390.1 L150.4 389.6 L151.8 390.4 L153.2 390.3 L154.6 390.5 L156.0 389.9 L157.4 390.0 L158.8 390.4 L160.2 389.9 L161.6 389.3 L163.0 390.3 L164.4 390.5 L165.8 389.8 L167.2 389.2 L168.6 390.3 L170.0 390.2 L171.4 389.3 L172.9 389.4 L174.3 389.2 L175.7 390.2 L177.1 389.6 L178.5 390.5 L179.9 390.5 L181.3 389.6 L182.7 390.2 L184.1 390.0 L185.5 390.5 L186.9 390.7 L188.3 390.3 L189.8 390.2 L191.3 391.7 L192.8 391.6 L194.2 392.5 L195.6 392.5 L197.0 392.7 L198.4 393.0 L199.8 392.9 L201.2 392.8 L202.6 392.3 L204.1 393.2 L205.5 393.0 L207.0 393.1 L208.5 393.7 L209.9 392.7 L211.4 393.4 L213.0 392.8 L214.7 393.8 L216.3 394.3 L218.0 393.0 L219.6 392.6 L221.2 392.6 L222.7 392.7 L224.2 392.8 L225.6 392.8 L227.1 392.8 L228.6 393.5 L230.1 393.6 L231.5 393.3 L233.0 393.3 L234.5 393.0 L235.9 393.8 L237.5 393.6 L239.1 392.8 L240.9 390.2 L242.1 386.4 L243.3 385.8 L244.5 385.9 L245.8 385.0 L247.0 384.5 L248.2 385.0 L249.4 384.0 L250.7 384.2 L251.9 383.8 L253.5 385.3 L255.1 385.9 L256.3 389.4 L257.8 387.6 L259.3 387.1 L260.5 386.6 L261.7 385.7 L262.9 384.9 L264.2 383.9 L265.4 383.3 L266.6 383.7 L267.9 384.2 L269.1 383.9 L270.3 383.5 L271.5 383.5 L272.8 383.9 L274.0 385.0 L275.2 385.2 L276.4 384.9 L277.7 385.2 L278.9 385.6 L280.1 384.9 L281.4 384.0 L282.6 383.9 L283.8 384.0 L285.0 385.5 L286.3 386.3 L287.5 386.2 L288.7 387.7 L290.3 387.7 L291.9 386.8 L293.6 382.7 L294.8 381.3 L296.1 379.5 L298.0 373.9 L299.5 371.7 L301.2 374.0 L302.3 377.0 L303.4 378.1 L304.7 378.8 L305.9 380.1 L307.1 379.1 L308.3 377.5 L309.6 377.9 L310.8 378.3 L312.0 376.9 L313.2 377.4 L314.5 378.5 L315.7 378.2 L316.9 376.8 L318.2 376.8 L319.4 378.9 L320.6 380.7 L321.8 377.9 L323.1 377.7 L325.0 375.7 L326.8 376.8 L328.5 379.4 L330.4 376.8 L331.7 379.2 L332.9 379.4 L333.9 375.6 L335.3 380.8 L337.1 383.1 L339.0 382.6 L340.7 382.4 L342.3 382.6 L343.9 383.9 L345.5 384.6 L347.0 385.4 L348.5 385.7 L350.1 386.4 L351.7 387.4 L353.3 387.6 L355.0 388.3 L356.4 386.5 L357.9 385.4 L359.4 384.5 L360.8 383.5 L362.2 383.8 L363.6 382.9 L364.8 382.9 L366.0 383.4 L367.2 383.9 L368.5 385.0 L370.1 386.1 L371.7 386.4 L373.4 387.7 L375.0 387.3 L376.6 388.8 L378.3 389.5 L379.9 390.1 L381.6 390.1 L383.2 390.4 L384.4 391.1 L385.6 391.2 L386.9 391.3 L388.1 390.7 L389.3 390.3 L390.6 390.1 L392.2 391.5 L393.8 392.8 L395.5 392.8 L397.1 392.3 L398.7 392.1 L400.4 391.9 L401.9 391.7 L403.4 391.4 L405.0 391.2 L406.5 391.5 L408.0 391.2 L409.6 391.5 L411.1 391.2 L412.6 390.6 L413.9 390.5 L415.1 390.2 L416.3 389.3 L417.8 387.5 L419.3 384.4 L420.9 383.1 L422.1 382.7 L423.3 381.9 L424.5 381.8 L426.2 382.0 L427.8 381.0 L429.4 380.7 L431.1 379.7 L432.7 379.1 L434.4 379.3 L435.6 377.7 L436.8 377.2 L438.0 377.4 L439.3 376.3 L440.5 374.7 L441.7 374.4 L442.9 373.4 L444.2 372.8 L445.4 371.8 L446.6 373.4 L447.9 374.9 L449.1 376.2 L450.3 376.1 L451.5 376.4 L452.8 377.7 L454.4 377.7 L456.0 377.3 L457.7 378.4 L459.3 377.8 L460.9 377.4 L462.6 377.9 L464.2 377.6 L465.8 377.9 L467.5 378.1 L469.1 378.1 L470.8 378.9 L472.4 378.7 L473.6 379.3 L474.8 379.7 L476.1 379.2 L477.7 378.9 L479.3 377.9 L481.0 377.8 L482.6 378.2 L484.3 377.7 L485.9 377.6 L487.5 377.4 L489.2 376.2 L490.8 376.9 L492.0 376.0 L493.3 374.1 L494.5 374.3 L495.7 374.4 L496.9 374.4 L498.2 376.3 L499.8 375.5 L501.4 375.3 L503.1 373.9 L504.7 375.4 L506.3 374.9 L508.0 375.7 L509.6 375.3 L511.2 373.9 L512.9 374.3 L514.5 372.8 L516.2 372.0 L517.8 372.2 L519.4 371.6 L521.1 372.5 L522.7 371.9 L524.3 373.2 L526.0 373.4 L527.6 374.7 L529.2 374.8 L530.9 373.8 L532.5 374.7 L534.2 374.8 L535.8 376.1 L537.4 376.7 L538.7 376.9 L540.0 375.8 L541.9 374.7 L543.8 373.5 L545.6 373.0 L547.5 372.0 L549.4 369.7 L551.2 370.0 L553.1 369.3 L555.0 369.9 L556.9 370.1 L558.8 368.2 L560.6 369.4 L562.5 368.8 L564.4 367.1 L566.2 368.0 L567.5 365.3 L568.8 361.5 L570.0 359.8 L571.2 359.6 L572.5 362.1 L574.4 364.8 L576.2 367.0 L578.1 366.2 L580.0 366.9 L581.9 366.9 L583.8 368.5 L585.6 367.9 L586.9 363.9 L588.1 362.8 L590.0 359.1 L591.9 357.0 L593.8 356.3 L595.6 356.3 L597.5 354.0 L599.4 353.9 L601.2 354.2 L603.1 354.6 L605.0 357.2 L606.9 357.6 L608.8 356.0 L610.6 355.5 L612.5 359.7 L614.4 360.7 L616.2 360.5 L618.1 361.4 L620.0 360.1 L621.9 361.4 L623.8 359.8 L625.6 360.6 L627.5 360.5 L629.4 357.7 L631.2 357.6 L632.5 357.8 L634.4 361.1 L636.2 361.8 L638.1 361.1 L640.0 362.3 L641.9 364.9 L643.8 366.6 L645.6 366.7 L647.5 365.9 L649.4 365.5 L651.2 365.9 L653.1 368.3 L655.0 368.9 L656.9 367.6 L658.8 367.6 L660.6 371.0 L662.5 373.0 L664.4 371.7 L666.2 372.0 L668.1 372.7 L670.0 373.4 L671.9 374.6 L673.8 374.5 L675.6 374.4 L677.5 372.6 L679.4 372.4 L681.0 371.5 L682.5 370.5 L684.4 371.8 L686.2 373.7 L688.1 374.7 L690.0 375.2 L691.9 374.0 L693.8 373.6 L695.6 372.5 L697.5 372.9 L699.4 376.1 L701.2 378.4 L703.1 380.5 L705.0 380.6 L706.9 378.5 L708.8 375.8 L710.2 377.9 L711.9 380.0 L713.8 381.1 L715.6 379.5 L717.5 381.3 L719.4 382.9 L721.2 383.2 L723.1 382.4 L725.0 380.0 L726.9 380.1 L728.8 377.8 L730.6 379.7 L732.5 379.0 L734.4 377.7 L736.2 377.0 L738.1 373.7 L739.5 372.5 L740.8 374.8 L742.2 373.6 L743.6 373.0 L744.8 374.1 L746.0 374.2 L747.2 374.5 L748.5 372.2 L749.7 371.2 L750.9 369.7 L752.1 369.3 L753.4 367.2 L754.6 366.6 L755.8 364.7 L757.1 366.1 L758.3 365.2 L759.5 364.0 L760.7 364.7 L762.0 366.9 L763.2 369.3 L764.4 368.2 L765.6 369.9 L766.9 367.1 L768.1 366.5 L769.3 362.1 L770.6 361.9 L771.8 362.5 L773.0 359.7 L774.2 359.8 L775.5 359.5 L776.7 360.4 L777.9 361.7 L779.1 364.1 L780.4 363.6 L781.7 366.1 L783.0 367.6 L784.2 367.6 L785.5 367.5 L786.8 370.2 L788.0 371.6 L789.2 369.4 L790.5 366.8 L792.1 363.9 L793.8 360.0 L795.0 359.5 L796.2 357.8 L797.9 352.3 L799.5 347.4 L801.0 347.0 L802.5 347.8 L803.8 353.4 L805.0 357.1 L806.2 359.6 L807.5 359.0 L808.8 360.5 L810.0 360.3 L811.2 358.6 L812.5 356.1 L813.8 357.1 L815.0 356.3 L816.2 355.3 L817.5 355.5 L818.8 353.6 L820.0 354.5 L821.2 354.3 L822.5 355.0 L823.8 355.8 L825.0 354.1 L826.2 354.0 L827.5 352.0 L828.8 355.9 L830.0 356.4 L831.2 358.8 L832.5 351.8 L833.8 348.9 L835.0 348.3 L836.2 345.9 L837.8 344.3 L839.2 343.9 L840.9 344.2 L842.5 346.8 L843.8 344.5 L845.0 346.2 L846.2 344.9 L847.5 346.0 L848.8 347.0 L850.0 347.8 L851.2 347.1 L852.5 346.0 L853.8 344.0 L855.0 346.6 L856.2 346.7 L857.5 349.3 L858.8 349.4 L860.0 349.2 L861.2 347.1 L862.9 350.9 L864.5 354.4 L866.0 351.6 L867.5 349.3 L869.0 352.4 L870.5 356.5 L872.1 356.0 L873.8 356.8 L875.0 360.3 L876.2 363.3 L877.5 366.1 L879.0 366.3 L880.5 369.7 L882.1 364.1 L883.8 362.0 L885.4 356.9 L887.0 353.0 L888.5 355.7 L890.0 358.0 L891.2 361.2 L892.5 363.4 L893.8 363.9 L895.4 363.1 L897.0 358.6 L898.5 359.4 L900.0 361.1 L901.2 364.6 L902.5 367.4 L903.8 366.7 L905.0 364.0 L906.2 364.7 L907.5 361.7 L908.8 363.0 L910.0 360.9 L911.2 360.1 L912.5 358.8 L913.8 360.0 L915.0 358.8 L916.2 360.2 L917.5 364.2 L918.8 363.9 L920.4 366.8 L922.0 366.1 L923.5 365.8 L925.0 363.4 L926.2 366.0 L927.5 364.7 L928.8 366.9 L930.0 367.0 L931.2 369.1 L932.5 369.9 L933.8 368.3 L935.0 366.1 L936.2 365.2 L937.5 366.2 L938.8 367.9 L940.0 368.4 L941.7 369.2 L943.3 372.1 L945.0 373.1 L946.2 370.7 L947.5 371.6 L948.8 368.2 L950.0 369.3 L951.2 368.4 L952.5 371.0 L953.8 370.7 L955.0 367.9 L956.2 368.3 L957.5 368.4 L958.8 366.2 L960.0 365.6 L961.2 366.9 L962.5 369.2 L963.8 367.9 L965.0 369.8 L966.2 370.4 L967.5 370.5 L968.8 371.8 L970.0 373.9 L971.2 373.2 L972.5 373.3 L973.8 371.0 L975.0 370.8 L976.2 370.8 L977.5 368.6 L978.8 369.8 L980.0 369.3 L981.2 366.0 L982.5 363.3 L984.0 361.0 L985.5 361.7 L987.1 359.8 L988.8 363.1 L990.4 359.9 L992.0 360.0 L993.5 359.8 L995.0 361.2 L996.2 363.7 L997.5 363.4 L998.8 364.8 L1000.0 367.4 L1001.2 368.1 L1002.5 369.4 L1003.8 370.4 L1005.0 368.4 L1006.2 369.1 L1007.5 371.5 L1008.8 372.6 L1010.0 371.9 L1011.2 373.2 L1012.5 373.2 L1013.8 374.1 L1015.0 373.7 L1016.2 373.6 L1017.5 376.4 L1018.8 374.8 L1020.0 375.9 L1021.2 373.6 L1022.9 374.0 L1024.6 373.0 L1026.2 373.3 L1027.5 374.3 L1028.8 376.8 L1030.0 377.3 L1031.7 379.0 L1033.3 379.4 L1035.0 379.2 L1036.6 379.8 L1038.1 380.5 L1039.7 381.7 L1041.2 381.2 L1042.9 379.8 L1044.6 380.4 L1046.2 379.8 L1047.9 378.7 L1049.6 376.8 L1051.2 375.5 L1052.9 375.1 L1054.6 374.3 L1056.2 373.8 L1057.9 375.4 L1059.6 376.1 L1061.2 377.0 L1062.9 377.4 L1064.6 377.3 L1066.2 378.8 L1067.9 379.8 L1069.6 380.5 L1071.2 381.4 L1072.9 381.8 L1074.6 382.5 L1076.2 382.7 L1077.5 381.4 L1078.8 379.8 L1080.0 378.4 L1081.2 377.7 L1082.5 377.8 L1083.8 376.2 L1085.0 374.3 L1086.2 372.6 L1087.5 370.3 L1088.8 372.5 L1090.0 370.7 L1091.2 372.0 L1092.5 372.8 L1093.8 371.2 L1095.0 371.4 L1096.7 370.8 L1098.3 370.1 L1100.0 369.6 L1101.2 367.8 L1102.5 368.3 L1103.8 367.3 L1105.0 367.5 L1106.2 364.7 L1107.5 365.9 L1108.8 365.3 L1110.0 366.4 L1111.2 366.5 L1112.5 366.6 L1113.8 369.2 L1115.0 367.7 L1116.7 369.8 L1118.3 370.9 L1120.0 370.8 L1121.7 370.5 L1123.3 371.3 L1125.0 369.1 L1126.7 370.7 L1128.3 372.2 L1130.0 372.4 L1131.7 373.8 L1133.3 374.1 L1135.0 375.0 L1136.7 375.7 L1138.3 376.3 L1140.0 376.0 L1141.7 376.9 L1143.3 377.2 L1145.0 376.9 L1146.7 377.2 L1148.3 376.2 L1150.0 377.1 L1151.2 375.6 L1152.5 375.1 L1153.8 373.9 L1155.0 374.3 L1156.2 374.3 L1157.5 374.6 L1159.2 376.6 L1160.8 376.7 L1162.5 377.1 L1163.7 378.0 L1164.9 379.3 L1166.1 377.8 L1167.4 376.8 L1168.6 377.2 L1169.8 377.6 L1171.0 378.7 L1172.3 379.9 L1173.9 380.2 L1175.5 380.4 L1177.2 379.2 L1178.8 379.3 L1180.5 379.9 L1182.1 379.9 L1183.7 378.4 L1185.4 377.8 L1187.0 377.4 L1188.6 376.6 L1190.3 376.7 L1191.9 377.3 L1193.5 377.1 L1195.2 377.1 L1196.8 376.5 L1198.4 377.2 L1200.1 378.6 L1201.7 378.5 L1203.4 378.3 L1205.0 378.5 L1206.6 379.3 L1208.3 379.1 L1209.9 377.8 L1211.5 378.2 L1213.2 377.9 L1214.8 378.0 L1216.4 377.6 L1218.1 377.5 L1219.7 377.2 L1221.3 377.0 L1223.0 376.8 L1224.6 377.2 L1226.3 378.0 L1227.9 378.0 L1229.5 378.6 L1231.2 379.9 L1232.8 379.7 L1234.4 379.9 L1236.1 380.0 L1237.7 381.4 L1239.3 381.1 L1241.0 382.3 L1242.6 383.4 L1244.3 383.2 L1245.9 384.0 L1247.5 384.7 L1249.2 384.8 L1250.8 384.5 L1252.4 384.0 L1254.1 384.4 L1255.7 384.4 L1257.3 384.3 L1259.0 383.3 L1260.6 382.8 L1262.2 382.7 L1263.9 382.6 L1265.5 381.6 L1266.7 380.9 L1268.0 380.5 L1269.2 380.4 L1270.4 379.7 L1271.7 380.8 L1272.9 380.9 L1274.1 378.8 L1275.3 377.4 L1276.6 375.4 L1277.8 376.0 L1279.0 377.9 L1280.2 378.6 L1281.5 379.1 L1282.7 379.4 L1283.9 380.3 L1285.2 380.5 L1286.4 379.7 L1287.6 380.5 L1289.2 379.9 L1290.9 379.3 L1292.5 379.2 L1294.2 378.9 L1295.8 379.1 L1297.4 379.8 L1299.1 378.9 L1300.7 378.4 L1302.3 378.0 L1304.0 378.7 L1305.6 378.9 L1307.2 379.2 L1308.9 377.9 L1310.5 376.4 L1312.2 376.4 L1313.8 375.8 L1315.4 375.5 L1317.1 374.9 L1318.3 374.5 L1319.5 375.1 L1320.7 375.5 L1322.0 376.4 L1323.2 375.3 L1324.4 374.8 L1326.1 375.4 L1327.7 374.9 L1329.3 373.7 L1331.0 374.1 L1332.6 373.9 L1334.2 373.2 L1335.9 372.7 L1337.5 373.7 L1339.1 373.8 L1340.8 373.7 L1342.4 374.1 L1344.0 373.8 L1345.7 373.6 L1347.3 372.3 L1349.0 372.0 L1350.6 372.0 L1352.2 371.0 L1353.9 372.0 L1355.5 370.7 L1357.1 370.0 L1358.8 369.5 L1360.4 370.0 L1362.0 371.3 L1363.7 371.6 L1365.3 371.2 L1367.0 370.8 L1368.6 370.0 L1370.2 370.3 L1371.9 372.0 L1373.5 372.5 L1374.7 370.9 L1376.0 367.9 L1377.9 369.1 L1379.4 369.6 L1380.9 371.7 L1382.5 372.2 L1384.1 373.0 L1385.8 373.8 L1387.4 374.4 L1389.0 374.2 L1390.7 375.5 L1392.3 373.7 L1393.9 374.5 L1395.6 373.4 L1397.2 372.4 L1398.9 373.0 L1400.5 373.8 L1402.1 373.4 L1403.8 373.5 L1405.4 372.7 L1407.0 372.3 L1408.7 373.2 L1410.3 372.0 L1411.9 372.4 L1413.6 372.5 L1415.2 371.8 L1416.8 371.6 L1418.5 372.7 L1420.1 372.0 L1421.8 373.2 L1423.4 371.9 L1425.0 372.8 L1426.7 372.9 L1428.3 371.4 L1429.9 372.5 L1431.6 371.5 L1433.2 372.7 L1434.8 372.4 L1436.5 373.5 L1438.1 372.7 L1439.8 372.7 L1441.0 372.9 L1442.2 374.0 L1443.4 374.9 L1445.1 373.9 L1446.7 373.3 L1448.3 374.4 L1450.0 373.1 L1451.6 374.1 L1453.2 372.7 L1454.9 372.4 L1456.5 372.5 L1458.2 374.2 L1459.8 375.0 L1461.4 374.3 L1463.1 374.7 L1464.7 373.7 L1466.3 374.8 L1468.0 374.5 L1469.6 372.6 L1471.2 371.4 L1472.9 372.1 L1474.5 370.4 L1476.2 371.6 L1477.8 370.3 L1479.4 369.1 L1481.1 369.1 L1482.7 367.7 L1484.3 367.7 L1486.0 366.1 L1487.6 367.4 L1488.8 365.5 L1490.1 366.2 L1491.3 363.7 L1492.5 364.3 L1493.7 364.3 L1495.0 363.7 L1496.2 363.3 L1497.4 365.0 L1498.7 367.2 L1499.9 367.4 L1501.6 368.5 L1503.4 367.7 L1504.8 368.2 L1506.2 368.8 L1507.4 369.1 L1508.5 370.5 L1509.9 370.8 L1511.4 374.1 L1513.1 373.9 L1514.8 377.2 L1515.9 379.0 L1517.0 380.1 L1518.8 378.8 L1520.5 377.8 L1522.2 378.6 L1523.9 380.5 L1525.2 380.8 L1526.5 382.3 L1527.8 381.2 L1529.1 382.6 L1530.3 384.5 L1531.6 385.0 L1532.8 382.9 L1534.1 379.8 L1535.5 379.0 L1536.9 378.8 L1538.6 382.2 L1540.3 384.1 L1542.0 381.8 L1543.8 382.4 L1545.5 379.8 L1547.2 380.3 L1548.6 380.4 L1550.0 377.8 L1551.2 378.7 L1552.5 377.8 L1553.8 376.8 L1555.1 377.8 L1556.5 379.1 L1558.0 379.5 L1559.1 381.2 L1560.2 380.7 L1561.7 380.8 L1563.1 378.7 L1564.5 378.5 L1565.9 380.1 L1567.6 380.0 L1569.3 381.8 L1571.0 383.2 L1572.7 383.5 L1574.4 383.6 L1576.1 383.1 L1577.8 384.5 L1579.5 384.4 L1580.7 385.7 L1581.8 385.1 L1583.2 385.4 L1584.7 384.6 L1586.1 384.2 L1587.5 384.5 L1588.9 383.9 L1590.4 384.1 L1591.8 386.1" stroke="#f9a244"/></g><circle cx="848.6" cy="260.4" r="4.9" fill="#2fb917" stroke="rgba(200,115,130,0.85)" stroke-width="0.8"/><path d="M848.6 257.7V265.0" stroke="rgba(215,140,130,0.95)" stroke-width="0.9"/><circle cx="839.4" cy="345.5" r="4.9" fill="#5ccc30" stroke="rgba(135,160,50,0.9)" stroke-width="0.8"/><path d="M839.4 342.8V350.1" stroke="rgba(170,150,60,0.95)" stroke-width="0.9"/><circle cx="1251.5" cy="376.6" r="4.9" fill="#2fb917" stroke="rgba(200,115,130,0.85)" stroke-width="0.8"/><path d="M1251.5 373.90000000000003V381.20000000000005" stroke="rgba(215,140,130,0.95)" stroke-width="0.9"/><circle cx="1590.5" cy="388.4" r="4.9" fill="#5ccc30" stroke="rgba(135,160,50,0.9)" stroke-width="0.8"/><path d="M1590.5 385.7V393.0" stroke="rgba(170,150,60,0.95)" stroke-width="0.9"/><path d="M25 532.5H1591" stroke="#080808" stroke-width="1.4" fill="none"/><g fill="none" stroke-width="1.15"><path d="M28.5 533.7v-1.7M31.5 533.7v-2.0M51.5 533.7v-1.7M63.5 533.7v-3.3M89.5 533.7v-3.4M98.5 533.7v-2.5M108.5 533.7v-1.9M111.5 533.7v-3.1M114.5 533.7v-2.4M117.5 533.7v-2.9M133.5 533.7v-3.1M140.5 533.7v-1.9M149.5 533.7v-2.3M206.5 533.7v-2.3M213.5 533.7v-2.0M216.5 533.7v-3.4M235.5 533.7v-2.2M238.5 533.7v-2.2M241.5 533.7v-12.5M245.5 533.7v-3.7M251.5 533.7v-2.3M257.5 533.7v-6.2M260.5 533.7v-4.4M267.5 533.7v-3.3M270.5 533.7v-5.4M273.5 533.7v-3.4M276.5 533.7v-5.0M280.5 533.7v-2.6M283.5 533.7v-3.3M289.5 533.7v-2.4M292.5 533.7v-9.2M295.5 533.7v-8.7M299.5 533.7v-19.2M302.5 533.7v-3.5M308.5 533.7v-2.8M311.5 533.7v-4.2M314.5 533.7v-6.3M318.5 533.7v-2.2M321.5 533.7v-3.1M324.5 533.7v-11.2M327.5 533.7v-2.3M330.5 533.7v-2.7M334.5 533.7v-2.2M337.5 533.7v-13.2M340.5 533.7v-3.3M346.5 533.7v-5.4M349.5 533.7v-5.8M356.5 533.7v-2.4M359.5 533.7v-9.2M362.5 533.7v-2.8M369.5 533.7v-3.2M372.5 533.7v-2.3M375.5 533.7v-3.4M378.5 533.7v-2.3M381.5 533.7v-6.0M384.5 533.7v-3.0M388.5 533.7v-3.2M391.5 533.7v-4.3M394.5 533.7v-4.5M400.5 533.7v-4.3M407.5 533.7v-2.4M413.5 533.7v-4.2M416.5 533.7v-4.4M419.5 533.7v-11.2M423.5 533.7v-2.4M426.5 533.7v-4.2M429.5 533.7v-7.2M432.5 533.7v-7.0M435.5 533.7v-2.5M439.5 533.7v-2.8M445.5 533.7v-7.1M448.5 533.7v-3.8M451.5 533.7v-2.3M458.5 533.7v-3.4M461.5 533.7v-4.2M464.5 533.7v-2.5M467.5 533.7v-2.3M473.5 533.7v-2.2M477.5 533.7v-6.9M483.5 533.7v-3.8M486.5 533.7v-2.4M489.5 533.7v-3.0M493.5 533.7v-3.7M496.5 533.7v-14.2M499.5 533.7v-2.2M502.5 533.7v-2.7M505.5 533.7v-3.8M512.5 533.7v-12.2M515.5 533.7v-4.0M518.5 533.7v-14.2M521.5 533.7v-2.8M524.5 533.7v-4.8M528.5 533.7v-5.3M531.5 533.7v-3.0M534.5 533.7v-4.2M537.5 533.7v-4.8M540.5 533.7v-2.2M543.5 533.7v-12.2M547.5 533.7v-5.1M550.5 533.7v-2.2M553.5 533.7v-2.5M556.5 533.7v-2.7M563.5 533.7v-5.3M566.5 533.7v-6.5M569.5 533.7v-2.7M572.5 533.7v-2.3M575.5 533.7v-5.6M578.5 533.7v-6.0M585.5 533.7v-5.3M588.5 533.7v-2.2M591.5 533.7v-14.2M594.5 533.7v-4.1M598.5 533.7v-3.4M601.5 533.7v-6.9M613.5 533.7v-3.4M617.5 533.7v-2.9M620.5 533.7v-2.8M623.5 533.7v-2.5M626.5 533.7v-2.2M629.5 533.7v-2.2M632.5 533.7v-2.2M636.5 533.7v-2.4M639.5 533.7v-2.3M642.5 533.7v-2.6M648.5 533.7v-3.5M652.5 533.7v-2.2M655.5 533.7v-3.4M658.5 533.7v-4.2M661.5 533.7v-2.8M664.5 533.7v-2.3M667.5 533.7v-5.9M671.5 533.7v-2.5M674.5 533.7v-2.2M677.5 533.7v-2.2M683.5 533.7v-5.8M687.5 533.7v-6.3M690.5 533.7v-3.5M693.5 533.7v-2.6M696.5 533.7v-3.1M699.5 533.7v-2.2M702.5 533.7v-7.3M706.5 533.7v-13.2M709.5 533.7v-16.2M712.5 533.7v-5.1M715.5 533.7v-3.2M718.5 533.7v-3.1M722.5 533.7v-8.9M725.5 533.7v-7.3M728.5 533.7v-5.7M731.5 533.7v-7.4M734.5 533.7v-2.8M737.5 533.7v-8.5M741.5 533.7v-6.6M744.5 533.7v-3.7M747.5 533.7v-9.4M750.5 533.7v-18.2M753.5 533.7v-13.2M757.5 533.7v-7.3M760.5 533.7v-8.3M766.5 533.7v-15.2M769.5 533.7v-13.2M772.5 533.7v-4.8M776.5 533.7v-3.4M779.5 533.7v-2.8M785.5 533.7v-15.2M788.5 533.7v-16.2M791.5 533.7v-19.2M795.5 533.7v-17.2M798.5 533.7v-13.2M801.5 533.7v-33.2M804.5 533.7v-11.2M807.5 533.7v-7.3M811.5 533.7v-15.2M817.5 533.7v-6.1M820.5 533.7v-16.2M823.5 533.7v-12.2M826.5 533.7v-7.3M830.5 533.7v-5.7M833.5 533.7v-29.2M836.5 533.7v-10.4M839.5 533.7v-18.2M842.5 533.7v-3.7M846.5 533.7v-14.2M849.5 533.7v-13.9M852.5 533.7v-5.6M855.5 533.7v-7.3M861.5 533.7v-12.2M865.5 533.7v-13.5M868.5 533.7v-7.6M874.5 533.7v-6.1M877.5 533.7v-13.5M881.5 533.7v-19.2M884.5 533.7v-4.1M887.5 533.7v-3.7M890.5 533.7v-13.6M893.5 533.7v-9.3M896.5 533.7v-27.2M900.5 533.7v-4.0M906.5 533.7v-34.2M909.5 533.7v-4.4M912.5 533.7v-10.2M916.5 533.7v-7.8M919.5 533.7v-9.2M922.5 533.7v-4.5M925.5 533.7v-10.0M928.5 533.7v-3.6M931.5 533.7v-9.2M935.5 533.7v-7.1M941.5 533.7v-7.0M944.5 533.7v-3.9M947.5 533.7v-8.2M950.5 533.7v-10.2M954.5 533.7v-4.9M957.5 533.7v-12.2M960.5 533.7v-3.1M963.5 533.7v-4.9M966.5 533.7v-2.8M970.5 533.7v-9.2M973.5 533.7v-2.7M976.5 533.7v-2.8M979.5 533.7v-2.7M982.5 533.7v-9.7M985.5 533.7v-12.2M992.5 533.7v-8.2M995.5 533.7v-2.7M998.5 533.7v-3.0M1001.5 533.7v-4.1M1005.5 533.7v-6.5M1008.5 533.7v-3.8M1014.5 533.7v-2.6M1017.5 533.7v-2.2M1020.5 533.7v-2.1M1027.5 533.7v-5.4M1030.5 533.7v-4.1M1033.5 533.7v-2.1M1036.5 533.7v-4.2M1040.5 533.7v-6.1M1043.5 533.7v-5.8M1046.5 533.7v-2.0M1049.5 533.7v-3.1M1052.5 533.7v-2.0M1055.5 533.7v-2.4M1059.5 533.7v-4.2M1062.5 533.7v-2.1M1068.5 533.7v-2.3M1071.5 533.7v-2.0M1075.5 533.7v-6.5M1078.5 533.7v-2.2M1081.5 533.7v-5.4M1084.5 533.7v-2.7M1087.5 533.7v-12.2M1090.5 533.7v-2.6M1094.5 533.7v-2.2M1097.5 533.7v-2.1M1100.5 533.7v-4.1M1103.5 533.7v-18.2M1106.5 533.7v-3.4M1113.5 533.7v-2.0M1116.5 533.7v-3.0M1119.5 533.7v-4.8M1122.5 533.7v-2.3M1129.5 533.7v-1.8M1132.5 533.7v-5.0M1135.5 533.7v-3.3M1138.5 533.7v-2.2M1141.5 533.7v-2.7M1144.5 533.7v-5.0M1148.5 533.7v-2.1M1151.5 533.7v-8.2M1154.5 533.7v-2.5M1157.5 533.7v-3.6M1160.5 533.7v-2.1M1164.5 533.7v-1.8M1167.5 533.7v-1.8M1173.5 533.7v-2.0M1176.5 533.7v-3.4M1179.5 533.7v-2.1M1183.5 533.7v-2.8M1186.5 533.7v-4.1M1189.5 533.7v-10.2M1195.5 533.7v-3.3M1199.5 533.7v-4.7M1202.5 533.7v-1.8M1205.5 533.7v-5.2M1208.5 533.7v-2.7M1211.5 533.7v-3.9M1218.5 533.7v-3.3M1224.5 533.7v-2.5M1227.5 533.7v-2.8M1230.5 533.7v-1.9M1237.5 533.7v-1.8M1240.5 533.7v-1.9M1243.5 533.7v-3.9M1246.5 533.7v-3.1M1249.5 533.7v-4.3M1253.5 533.7v-3.5M1256.5 533.7v-1.8M1259.5 533.7v-2.1M1262.5 533.7v-4.9M1265.5 533.7v-3.8M1272.5 533.7v-4.8M1275.5 533.7v-12.2M1278.5 533.7v-2.2M1281.5 533.7v-2.2M1284.5 533.7v-4.5M1288.5 533.7v-3.6M1291.5 533.7v-3.3M1294.5 533.7v-2.1M1297.5 533.7v-2.3M1300.5 533.7v-7.2M1303.5 533.7v-1.8M1307.5 533.7v-1.9M1316.5 533.7v-3.1M1323.5 533.7v-2.6M1326.5 533.7v-3.3M1329.5 533.7v-2.2M1332.5 533.7v-2.6M1338.5 533.7v-2.4M1342.5 533.7v-3.5M1345.5 533.7v-1.8M1354.5 533.7v-4.3M1361.5 533.7v-2.2M1364.5 533.7v-3.9M1367.5 533.7v-4.3M1370.5 533.7v-16.2M1373.5 533.7v-43.2M1377.5 533.7v-16.2M1380.5 533.7v-3.1M1386.5 533.7v-6.2M1389.5 533.7v-2.3M1393.5 533.7v-3.1M1396.5 533.7v-3.4M1399.5 533.7v-4.8M1402.5 533.7v-4.2M1405.5 533.7v-2.0M1408.5 533.7v-2.2M1412.5 533.7v-2.3M1415.5 533.7v-1.9M1418.5 533.7v-2.0M1421.5 533.7v-3.9M1424.5 533.7v-6.2M1427.5 533.7v-2.2M1431.5 533.7v-2.8M1434.5 533.7v-3.7M1437.5 533.7v-3.4M1440.5 533.7v-1.8M1443.5 533.7v-2.1M1447.5 533.7v-3.7M1450.5 533.7v-2.3M1456.5 533.7v-4.2M1459.5 533.7v-2.9M1462.5 533.7v-2.1M1466.5 533.7v-1.9M1469.5 533.7v-3.0M1472.5 533.7v-2.6M1475.5 533.7v-3.0M1482.5 533.7v-1.8M1485.5 533.7v-6.7M1488.5 533.7v-5.7M1491.5 533.7v-7.7M1494.5 533.7v-2.1M1507.5 533.7v-2.1M1510.5 533.7v-3.0M1513.5 533.7v-4.7M1517.5 533.7v-2.7M1520.5 533.7v-1.8M1523.5 533.7v-2.0M1526.5 533.7v-3.9M1529.5 533.7v-2.1M1532.5 533.7v-2.1M1536.5 533.7v-2.2M1539.5 533.7v-1.8M1542.5 533.7v-1.9M1545.5 533.7v-2.3M1552.5 533.7v-2.6M1571.5 533.7v-2.4M1574.5 533.7v-2.3M1583.5 533.7v-1.9M1590.5 533.7v-2.3" stroke="#89A54E"/><path d="M25.5 533.0v3.0M28.5 533.0v3.1M31.5 533.0v3.8M35.5 533.0v3.9M38.5 533.0v4.6M41.5 533.0v2.2M44.5 533.0v2.4M47.5 533.0v5.6M51.5 533.0v3.3M57.5 533.0v2.3M60.5 533.0v2.6M63.5 533.0v4.1M66.5 533.0v2.8M70.5 533.0v3.2M76.5 533.0v2.4M79.5 533.0v2.3M82.5 533.0v3.6M86.5 533.0v2.7M92.5 533.0v2.6M95.5 533.0v4.7M98.5 533.0v2.5M101.5 533.0v3.1M105.5 533.0v2.7M108.5 533.0v4.2M111.5 533.0v3.9M114.5 533.0v7.1M117.5 533.0v3.1M124.5 533.0v4.0M127.5 533.0v3.5M130.5 533.0v4.1M133.5 533.0v2.3M136.5 533.0v2.2M143.5 533.0v3.3M149.5 533.0v6.6M165.5 533.0v3.8M168.5 533.0v2.6M171.5 533.0v5.6M175.5 533.0v2.6M181.5 533.0v3.1M187.5 533.0v2.2M190.5 533.0v2.3M194.5 533.0v4.3M200.5 533.0v2.6M206.5 533.0v4.5M210.5 533.0v6.6M216.5 533.0v2.7M219.5 533.0v2.2M222.5 533.0v3.8M225.5 533.0v2.2M229.5 533.0v2.2M235.5 533.0v2.3M238.5 533.0v4.2M241.5 533.0v3.6M245.5 533.0v6.1M248.5 533.0v3.0M251.5 533.0v4.1M254.5 533.0v13.4M257.5 533.0v4.2M260.5 533.0v6.6M267.5 533.0v6.4M270.5 533.0v3.7M273.5 533.0v6.2M276.5 533.0v3.0M280.5 533.0v6.4M283.5 533.0v5.8M286.5 533.0v4.3M289.5 533.0v4.5M292.5 533.0v4.5M295.5 533.0v3.8M299.5 533.0v6.9M302.5 533.0v18.3M305.5 533.0v3.0M308.5 533.0v6.5M311.5 533.0v3.0M314.5 533.0v7.6M318.5 533.0v4.0M321.5 533.0v3.5M324.5 533.0v3.1M327.5 533.0v3.3M330.5 533.0v5.1M334.5 533.0v29.1M337.5 533.0v4.0M340.5 533.0v3.1M343.5 533.0v4.5M346.5 533.0v3.3M349.5 533.0v3.5M353.5 533.0v8.4M356.5 533.0v5.9M359.5 533.0v4.0M362.5 533.0v5.5M365.5 533.0v12.1M369.5 533.0v6.1M372.5 533.0v3.0M375.5 533.0v4.4M384.5 533.0v6.2M388.5 533.0v4.0M391.5 533.0v11.1M394.5 533.0v3.9M397.5 533.0v3.0M400.5 533.0v7.0M404.5 533.0v4.4M407.5 533.0v7.5M410.5 533.0v3.9M413.5 533.0v6.2M416.5 533.0v3.0M419.5 533.0v3.7M423.5 533.0v8.4M426.5 533.0v5.0M429.5 533.0v5.5M432.5 533.0v3.0M435.5 533.0v15.1M439.5 533.0v3.1M442.5 533.0v4.6M445.5 533.0v5.5M451.5 533.0v4.4M454.5 533.0v3.0M458.5 533.0v5.2M461.5 533.0v4.9M464.5 533.0v3.0M467.5 533.0v6.5M473.5 533.0v8.0M480.5 533.0v4.3M483.5 533.0v3.1M486.5 533.0v3.0M489.5 533.0v5.7M493.5 533.0v4.1M496.5 533.0v8.5M499.5 533.0v7.9M502.5 533.0v3.4M505.5 533.0v5.4M508.5 533.0v8.9M512.5 533.0v3.0M515.5 533.0v3.1M518.5 533.0v5.8M521.5 533.0v15.6M524.5 533.0v19.6M528.5 533.0v5.4M531.5 533.0v3.4M534.5 533.0v9.0M537.5 533.0v8.2M540.5 533.0v7.7M543.5 533.0v4.4M547.5 533.0v3.0M550.5 533.0v3.6M553.5 533.0v3.1M556.5 533.0v3.1M559.5 533.0v8.4M563.5 533.0v3.6M566.5 533.0v7.9M569.5 533.0v3.8M572.5 533.0v4.9M575.5 533.0v4.9M578.5 533.0v3.5M582.5 533.0v5.0M585.5 533.0v3.0M588.5 533.0v3.0M591.5 533.0v17.6M594.5 533.0v3.4M598.5 533.0v6.6M601.5 533.0v5.8M604.5 533.0v6.1M607.5 533.0v5.7M610.5 533.0v7.8M613.5 533.0v6.1M620.5 533.0v3.2M623.5 533.0v8.7M626.5 533.0v5.6M629.5 533.0v4.3M632.5 533.0v3.1M636.5 533.0v6.1M639.5 533.0v14.6M642.5 533.0v19.6M645.5 533.0v7.8M648.5 533.0v8.6M652.5 533.0v14.6M658.5 533.0v3.3M661.5 533.0v24.6M664.5 533.0v3.2M671.5 533.0v4.7M674.5 533.0v7.1M677.5 533.0v3.4M680.5 533.0v4.3M683.5 533.0v3.6M687.5 533.0v3.1M690.5 533.0v4.7M693.5 533.0v3.6M696.5 533.0v6.1M702.5 533.0v6.1M706.5 533.0v3.5M709.5 533.0v13.6M712.5 533.0v3.7M715.5 533.0v14.6M718.5 533.0v3.4M722.5 533.0v5.3M725.5 533.0v3.2M728.5 533.0v6.6M731.5 533.0v5.6M734.5 533.0v3.2M737.5 533.0v4.4M741.5 533.0v7.8M744.5 533.0v12.6M747.5 533.0v7.5M750.5 533.0v3.9M753.5 533.0v4.1M757.5 533.0v5.7M760.5 533.0v5.2M763.5 533.0v6.7M769.5 533.0v3.4M772.5 533.0v6.5M779.5 533.0v8.8M785.5 533.0v9.7M788.5 533.0v14.6M791.5 533.0v14.6M798.5 533.0v5.6M801.5 533.0v18.6M804.5 533.0v20.6M807.5 533.0v29.3M811.5 533.0v5.8M814.5 533.0v21.6M817.5 533.0v19.6M823.5 533.0v15.4M826.5 533.0v16.8M830.5 533.0v16.8M833.5 533.0v16.7M836.5 533.0v5.5M839.5 533.0v7.2M842.5 533.0v11.6M846.5 533.0v6.5M849.5 533.0v18.6M852.5 533.0v14.2M855.5 533.0v16.8M858.5 533.0v8.6M861.5 533.0v26.6M865.5 533.0v17.6M868.5 533.0v4.1M874.5 533.0v4.8M877.5 533.0v28.6M884.5 533.0v17.6M887.5 533.0v4.3M890.5 533.0v15.8M893.5 533.0v17.7M896.5 533.0v24.6M900.5 533.0v22.6M903.5 533.0v10.9M906.5 533.0v5.5M912.5 533.0v8.4M916.5 533.0v21.6M919.5 533.0v5.4M922.5 533.0v8.8M925.5 533.0v3.6M928.5 533.0v11.8M931.5 533.0v7.6M935.5 533.0v12.6M938.5 533.0v6.2M941.5 533.0v3.9M944.5 533.0v9.3M947.5 533.0v5.9M950.5 533.0v13.6M954.5 533.0v17.6M957.5 533.0v5.9M960.5 533.0v9.7M963.5 533.0v6.4M966.5 533.0v4.5M970.5 533.0v17.6M973.5 533.0v10.0M976.5 533.0v8.1M979.5 533.0v5.2M982.5 533.0v3.6M985.5 533.0v3.8M989.5 533.0v4.2M992.5 533.0v19.6M995.5 533.0v13.0M998.5 533.0v4.2M1001.5 533.0v11.9M1005.5 533.0v6.3M1008.5 533.0v4.1M1011.5 533.0v6.2M1014.5 533.0v8.4M1017.5 533.0v4.8M1020.5 533.0v4.3M1024.5 533.0v5.3M1027.5 533.0v15.6M1030.5 533.0v4.9M1033.5 533.0v4.5M1036.5 533.0v4.5M1040.5 533.0v4.9M1043.5 533.0v4.1M1046.5 533.0v8.8M1049.5 533.0v4.1M1052.5 533.0v4.2M1055.5 533.0v5.2M1059.5 533.0v4.5M1062.5 533.0v4.4M1065.5 533.0v5.0M1068.5 533.0v4.8M1071.5 533.0v6.5M1075.5 533.0v4.6M1081.5 533.0v4.4M1084.5 533.0v5.0M1087.5 533.0v5.6M1090.5 533.0v5.5M1094.5 533.0v4.2M1097.5 533.0v6.1M1100.5 533.0v4.1M1103.5 533.0v5.1M1106.5 533.0v5.4M1109.5 533.0v4.8M1113.5 533.0v5.3M1116.5 533.0v7.2M1119.5 533.0v5.9M1122.5 533.0v4.1M1125.5 533.0v14.6M1129.5 533.0v4.5M1132.5 533.0v3.5M1135.5 533.0v3.6M1138.5 533.0v3.6M1141.5 533.0v5.0M1144.5 533.0v3.9M1148.5 533.0v5.6M1151.5 533.0v6.3M1154.5 533.0v4.7M1157.5 533.0v4.6M1160.5 533.0v3.5M1164.5 533.0v3.4M1167.5 533.0v4.3M1170.5 533.0v6.6M1173.5 533.0v4.5M1176.5 533.0v3.7M1179.5 533.0v5.8M1183.5 533.0v4.1M1186.5 533.0v6.1M1189.5 533.0v3.6M1192.5 533.0v7.1M1195.5 533.0v4.1M1199.5 533.0v7.5M1202.5 533.0v3.4M1205.5 533.0v3.5M1208.5 533.0v4.4M1211.5 533.0v6.4M1214.5 533.0v5.9M1218.5 533.0v4.7M1221.5 533.0v3.4M1224.5 533.0v3.5M1227.5 533.0v3.5M1230.5 533.0v4.4M1234.5 533.0v3.4M1240.5 533.0v6.6M1243.5 533.0v4.1M1249.5 533.0v7.6M1253.5 533.0v3.5M1256.5 533.0v3.4M1259.5 533.0v4.5M1262.5 533.0v3.4M1265.5 533.0v5.7M1268.5 533.0v5.9M1272.5 533.0v4.1M1275.5 533.0v3.4M1278.5 533.0v4.0M1281.5 533.0v5.1M1284.5 533.0v3.8M1288.5 533.0v3.6M1291.5 533.0v3.5M1294.5 533.0v4.2M1300.5 533.0v6.7M1307.5 533.0v4.1M1310.5 533.0v5.3M1313.5 533.0v3.9M1316.5 533.0v4.0M1319.5 533.0v6.7M1323.5 533.0v4.8M1326.5 533.0v4.3M1329.5 533.0v3.6M1332.5 533.0v3.4M1335.5 533.0v4.9M1338.5 533.0v7.5M1342.5 533.0v7.5M1345.5 533.0v7.5M1348.5 533.0v5.2M1351.5 533.0v4.5M1354.5 533.0v5.5M1358.5 533.0v4.6M1361.5 533.0v4.8M1364.5 533.0v4.1M1367.5 533.0v5.5M1370.5 533.0v3.3M1373.5 533.0v23.1M1377.5 533.0v3.3M1383.5 533.0v4.7M1386.5 533.0v4.9M1389.5 533.0v3.6M1393.5 533.0v5.1M1396.5 533.0v4.0M1399.5 533.0v4.7M1402.5 533.0v4.3M1405.5 533.0v3.1M1408.5 533.0v5.0M1412.5 533.0v9.6M1415.5 533.0v3.7M1418.5 533.0v5.2M1421.5 533.0v3.1M1424.5 533.0v2.5M1427.5 533.0v5.9M1431.5 533.0v2.7M1434.5 533.0v2.7M1437.5 533.0v5.2M1440.5 533.0v5.5M1443.5 533.0v8.6M1447.5 533.0v5.8M1450.5 533.0v9.6M1456.5 533.0v3.1M1459.5 533.0v6.2M1466.5 533.0v3.0M1469.5 533.0v2.5M1472.5 533.0v4.5M1475.5 533.0v4.7M1478.5 533.0v5.2M1482.5 533.0v3.0M1485.5 533.0v4.8M1488.5 533.0v3.7M1491.5 533.0v2.8M1494.5 533.0v2.5M1497.5 533.0v3.3M1501.5 533.0v2.6M1507.5 533.0v2.5M1510.5 533.0v4.4M1517.5 533.0v5.2M1520.5 533.0v2.8M1523.5 533.0v3.4M1526.5 533.0v3.7M1529.5 533.0v2.8M1532.5 533.0v3.2M1536.5 533.0v3.3M1539.5 533.0v3.5M1542.5 533.0v2.5M1545.5 533.0v2.7M1548.5 533.0v3.1M1552.5 533.0v5.9M1555.5 533.0v2.0M1558.5 533.0v2.3M1561.5 533.0v1.8M1564.5 533.0v2.2M1571.5 533.0v2.0M1574.5 533.0v2.6M1577.5 533.0v2.6M1580.5 533.0v1.8M1583.5 533.0v1.8M1586.5 533.0v3.7M1590.5 533.0v2.2" stroke="#80699B"/></g><path d="M25.4 636.8V704M28.4 634V704M31.6 634V704M35.4 696.8V704" stroke="#3D96AE" stroke-width="1" fill="none"/></svg>
<span class="l ax" style="top:482.39px">1k</span>
<span class="l ax" style="top:522.49px">0k</span>
<span class="l ax" style="top:562.29px">-1k</span>
<span class="l ax" style="top:640.69px">500</span>
<span class="l ax" style="top:700.99px">0</span>
<svg class="g" style="left:1596.6px;top:319.4px" width="20" height="28.0" viewBox="-10 -14.0 20 28.0" fill="#777"><text transform="rotate(90) translate(-12.00 4.56)" x="0" y="0" font-size="12">收益</text></svg>
<svg class="g" style="left:1595.8px;top:487.7px" width="20" height="52.0" viewBox="-10 -26.0 20 52.0" fill="#777"><text transform="rotate(90) translate(-24.00 4.56)" x="0" y="0" font-size="12">每日盈亏</text></svg>
<svg class="g" style="left:1595.8px;top:650.2px" width="20" height="28.0" viewBox="-10 -14.0 20 28.0" fill="#777"><text transform="rotate(90) translate(-12.00 4.56)" x="0" y="0" font-size="12">买卖</text></svg>
<div class="fab"><svg width="44" height="44" viewBox="0 0 44 44"><path d="M8.3 25.5 V23.5 A14 14.2 0 0 1 36.3 23.5 V25.5" fill="none" stroke="#fff" stroke-width="1.5"/><path d="M9.4 21.8 V30.3 H8.6 A4.4 4.25 0 0 1 8.6 21.8 Z" fill="#fff"/><ellipse cx="23.6" cy="22.6" rx="12.6" ry="9.8" fill="#fff"/><circle cx="17.4" cy="22.2" r="1.45" fill="#4a4a55"/><circle cx="25.3" cy="22.2" r="1.45" fill="#4a4a55"/><path d="M19.6 26.0 L21.4 27.4 L23.2 26.0" fill="none" stroke="#4a4a55" stroke-width="0.8"/></svg></div>
<div class="card"><svg width="34" height="40" viewBox="0 0 34 40" fill="#a3abbd"><circle cx="12.2" cy="13" r="1.8"/><circle cx="12.2" cy="19.9" r="1.8"/><circle cx="12.2" cy="26.9" r="1.8"/><rect x="16.2" y="12.2" width="13.8" height="1.6" rx=".8"/><rect x="16.2" y="19.1" width="13.8" height="1.6" rx=".8"/><rect x="16.2" y="26.1" width="13.8" height="1.6" rx=".8"/></svg></div>
</body></html>
